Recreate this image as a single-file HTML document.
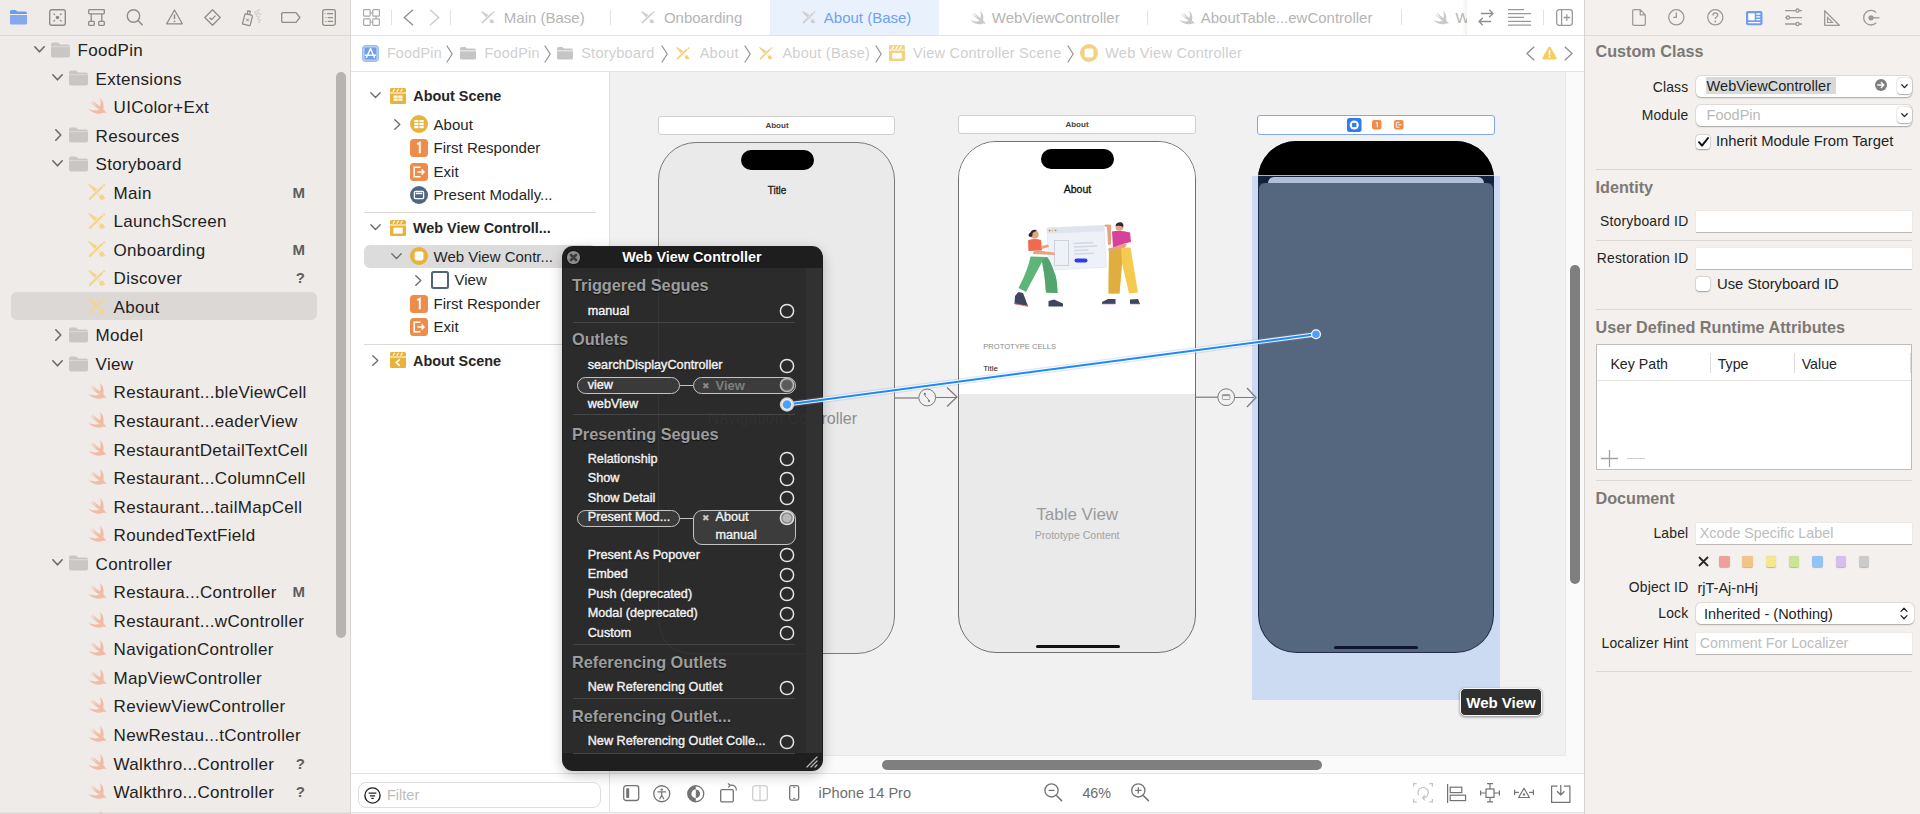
<!DOCTYPE html>
<html><head><meta charset="utf-8"><style>
html,body{margin:0;padding:0;}
body{width:1920px;height:814px;overflow:hidden;position:relative;background:#fff;font-family:"Liberation Sans",sans-serif;}
.a{position:absolute;}
.t{position:absolute;white-space:nowrap;}
svg.a{overflow:visible;}
</style></head><body>
<div class="a" style="left:0px;top:0px;width:350px;height:814px;background:#EFEBE8;"></div><div class="a" style="left:350px;top:0px;width:1px;height:814px;background:#D9D6D3;"></div><div class="a" style="left:0px;top:35px;width:350px;height:1px;background:#DAD7D4;"></div><div class="a" style="left:351px;top:0px;width:1234px;height:814px;background:#FFFFFF;"></div><div class="a" style="left:351px;top:35px;width:1234px;height:1px;background:#E3E3E3;"></div><div class="a" style="left:351px;top:71px;width:1234px;height:1px;background:#E3E3E3;"></div><div class="a" style="left:610px;top:72px;width:956px;height:683px;background:#F1F1F1;"></div><div class="a" style="left:609px;top:72px;width:1px;height:740px;background:#E2E2E2;"></div><div class="a" style="left:1566px;top:72px;width:19px;height:702px;background:#FAFAFA;"></div><div class="a" style="left:610px;top:755px;width:956px;height:18px;background:#FAFAFA;"></div><div class="a" style="left:610px;top:755px;width:956px;height:1px;background:#E8E8E8;"></div><div class="a" style="left:1565px;top:72px;width:1px;height:683px;background:#E8E8E8;"></div><div class="a" style="left:351px;top:773px;width:1234px;height:1px;background:#E3E3E3;"></div><div class="a" style="left:351px;top:812px;width:1234px;height:1px;background:#E2E2E2;"></div><div class="a" style="left:351px;top:813px;width:1234px;height:1px;background:#F4F4F4;"></div><div class="a" style="left:0px;top:812px;width:350px;height:1px;background:#E6E2DF;"></div><div class="a" style="left:0px;top:813px;width:350px;height:1px;background:#DCD8D5;"></div><div class="a" style="left:1584px;top:0px;width:1px;height:814px;background:#D6D3D0;"></div><div class="a" style="left:1585px;top:0px;width:335px;height:814px;background:#F3F0ED;"></div><div class="a" style="left:1585px;top:35px;width:335px;height:1px;background:#DCD9D6;"></div><div class="a" style="left:11px;top:292px;width:306px;height:28px;background:#DCD8D5;border-radius:6px;"></div><div class="t" style="top:42.01px;font-size:17px;line-height:17px;color:#222222;letter-spacing:0.3px;left:77.60px;">FoodPin</div><svg class="a" style="left:33.599999999999994px;top:45.6px;" width="11" height="7" viewBox="0 0 11 7"><path d="M0.8 0.8 L5.5 5.8 L10.2 0.8" fill="none" stroke="#6A6A6A" stroke-width="1.6" stroke-linecap="round" stroke-linejoin="round"/></svg><svg class="a" style="left:50.599999999999994px;top:41.6px;" width="19" height="16" viewBox="0 0 19 16"><path d="M0 2.5 Q0 0.5 2 0.5 L6.5 0.5 Q7.5 0.5 8.2 1.5 L9 2.6 L17 2.6 Q19 2.6 19 4.6 L19 13.8 Q19 15.6 17 15.6 L2 15.6 Q0 15.6 0 13.8 Z" fill="#C9C7C5"/><rect x="0" y="4.2" width="19" height="1" fill="#DCDAD8"/></svg><div class="t" style="top:70.55px;font-size:17px;line-height:17px;color:#222222;letter-spacing:0.3px;left:95.60px;">Extensions</div><svg class="a" style="left:51.599999999999994px;top:74.14px;" width="11" height="7" viewBox="0 0 11 7"><path d="M0.8 0.8 L5.5 5.8 L10.2 0.8" fill="none" stroke="#6A6A6A" stroke-width="1.6" stroke-linecap="round" stroke-linejoin="round"/></svg><svg class="a" style="left:68.6px;top:70.14px;" width="19" height="16" viewBox="0 0 19 16"><path d="M0 2.5 Q0 0.5 2 0.5 L6.5 0.5 Q7.5 0.5 8.2 1.5 L9 2.6 L17 2.6 Q19 2.6 19 4.6 L19 13.8 Q19 15.6 17 15.6 L2 15.6 Q0 15.6 0 13.8 Z" fill="#C9C7C5"/><rect x="0" y="4.2" width="19" height="1" fill="#DCDAD8"/></svg><div class="t" style="top:99.09px;font-size:17px;line-height:17px;color:#222222;letter-spacing:0.3px;left:113.60px;">UIColor+Ext</div><svg class="a" style="left:87.6px;top:97.98px;" width="19" height="17" viewBox="0 0 19 17"><path d="M11.9 0.1 C15.5 3 16.3 8 15.2 11 C16.5 12.5 18 14 18.4 15.2 C17 14.5 15.5 14.6 14.5 15 C11 16.5 5 15.5 0.1 10.7 C4 12.5 8.5 13 11.3 11.5 C8 9.5 4.5 6.5 2 3 C5 5.5 8 7.8 9.6 8.8 C7.5 6.8 5.6 4.5 4.3 1.9 C7 4.5 10 7 12 8.4 C13 5.8 13 3 11.9 0.1 Z" fill="#F2BBA5"/></svg><div class="t" style="top:127.63px;font-size:17px;line-height:17px;color:#222222;letter-spacing:0.3px;left:95.60px;">Resources</div><svg class="a" style="left:54.599999999999994px;top:129.22px;" width="7" height="12" viewBox="0 0 7 12"><path d="M0.8 0.8 L5.8 6 L0.8 11.2" fill="none" stroke="#6A6A6A" stroke-width="1.6" stroke-linecap="round" stroke-linejoin="round"/></svg><svg class="a" style="left:68.6px;top:127.22px;" width="19" height="16" viewBox="0 0 19 16"><path d="M0 2.5 Q0 0.5 2 0.5 L6.5 0.5 Q7.5 0.5 8.2 1.5 L9 2.6 L17 2.6 Q19 2.6 19 4.6 L19 13.8 Q19 15.6 17 15.6 L2 15.6 Q0 15.6 0 13.8 Z" fill="#C9C7C5"/><rect x="0" y="4.2" width="19" height="1" fill="#DCDAD8"/></svg><div class="t" style="top:156.17px;font-size:17px;line-height:17px;color:#222222;letter-spacing:0.3px;left:95.60px;">Storyboard</div><svg class="a" style="left:51.599999999999994px;top:159.76px;" width="11" height="7" viewBox="0 0 11 7"><path d="M0.8 0.8 L5.5 5.8 L10.2 0.8" fill="none" stroke="#6A6A6A" stroke-width="1.6" stroke-linecap="round" stroke-linejoin="round"/></svg><svg class="a" style="left:68.6px;top:155.76px;" width="19" height="16" viewBox="0 0 19 16"><path d="M0 2.5 Q0 0.5 2 0.5 L6.5 0.5 Q7.5 0.5 8.2 1.5 L9 2.6 L17 2.6 Q19 2.6 19 4.6 L19 13.8 Q19 15.6 17 15.6 L2 15.6 Q0 15.6 0 13.8 Z" fill="#C9C7C5"/><rect x="0" y="4.2" width="19" height="1" fill="#DCDAD8"/></svg><div class="t" style="top:184.71px;font-size:17px;line-height:17px;color:#222222;letter-spacing:0.3px;left:113.60px;">Main</div><div class="t" style="top:184.80px;font-size:15px;line-height:15px;color:#5E5E5E;font-weight:700;right:1615.00px;text-align:right;">M</div><svg class="a" style="left:87.6px;top:183.99999999999997px;" width="19" height="17" viewBox="0 0 19 17"><path d="M0.9 0.7 L8.4 5.0 L6.5 7.2 Z" fill="#F2D68E" stroke="#F2D68E" stroke-width="1.3" stroke-linejoin="round"/><path d="M1.9 14.9 L13.8 3.3" stroke="#F2D68E" stroke-width="2.3" stroke-linecap="round"/><circle cx="16" cy="1.4" r="1.2" fill="#F2D68E"/><circle cx="10.2" cy="10.7" r="0.6" fill="#F2D68E"/><circle cx="11.6" cy="9.4" r="0.6" fill="#F2D68E"/><path d="M11.2 13.2 Q11.6 10.4 14 10.6 Q16 11 16.2 13 Q16.6 14 17.6 14.6 Q14.8 16.2 12.6 15.4 Q11.2 14.8 11.2 13.2 Z" fill="#F2D68E"/></svg><div class="t" style="top:213.25px;font-size:17px;line-height:17px;color:#222222;letter-spacing:0.3px;left:113.60px;">LaunchScreen</div><svg class="a" style="left:87.6px;top:212.54px;" width="19" height="17" viewBox="0 0 19 17"><path d="M0.9 0.7 L8.4 5.0 L6.5 7.2 Z" fill="#F2D68E" stroke="#F2D68E" stroke-width="1.3" stroke-linejoin="round"/><path d="M1.9 14.9 L13.8 3.3" stroke="#F2D68E" stroke-width="2.3" stroke-linecap="round"/><circle cx="16" cy="1.4" r="1.2" fill="#F2D68E"/><circle cx="10.2" cy="10.7" r="0.6" fill="#F2D68E"/><circle cx="11.6" cy="9.4" r="0.6" fill="#F2D68E"/><path d="M11.2 13.2 Q11.6 10.4 14 10.6 Q16 11 16.2 13 Q16.6 14 17.6 14.6 Q14.8 16.2 12.6 15.4 Q11.2 14.8 11.2 13.2 Z" fill="#F2D68E"/></svg><div class="t" style="top:241.79px;font-size:17px;line-height:17px;color:#222222;letter-spacing:0.3px;left:113.60px;">Onboarding</div><div class="t" style="top:241.88px;font-size:15px;line-height:15px;color:#5E5E5E;font-weight:700;right:1615.00px;text-align:right;">M</div><svg class="a" style="left:87.6px;top:241.07999999999998px;" width="19" height="17" viewBox="0 0 19 17"><path d="M0.9 0.7 L8.4 5.0 L6.5 7.2 Z" fill="#F2D68E" stroke="#F2D68E" stroke-width="1.3" stroke-linejoin="round"/><path d="M1.9 14.9 L13.8 3.3" stroke="#F2D68E" stroke-width="2.3" stroke-linecap="round"/><circle cx="16" cy="1.4" r="1.2" fill="#F2D68E"/><circle cx="10.2" cy="10.7" r="0.6" fill="#F2D68E"/><circle cx="11.6" cy="9.4" r="0.6" fill="#F2D68E"/><path d="M11.2 13.2 Q11.6 10.4 14 10.6 Q16 11 16.2 13 Q16.6 14 17.6 14.6 Q14.8 16.2 12.6 15.4 Q11.2 14.8 11.2 13.2 Z" fill="#F2D68E"/></svg><div class="t" style="top:270.33px;font-size:17px;line-height:17px;color:#222222;letter-spacing:0.3px;left:113.60px;">Discover</div><div class="t" style="top:270.42px;font-size:15px;line-height:15px;color:#5E5E5E;font-weight:700;right:1615.00px;text-align:right;">?</div><svg class="a" style="left:87.6px;top:269.62px;" width="19" height="17" viewBox="0 0 19 17"><path d="M0.9 0.7 L8.4 5.0 L6.5 7.2 Z" fill="#F2D68E" stroke="#F2D68E" stroke-width="1.3" stroke-linejoin="round"/><path d="M1.9 14.9 L13.8 3.3" stroke="#F2D68E" stroke-width="2.3" stroke-linecap="round"/><circle cx="16" cy="1.4" r="1.2" fill="#F2D68E"/><circle cx="10.2" cy="10.7" r="0.6" fill="#F2D68E"/><circle cx="11.6" cy="9.4" r="0.6" fill="#F2D68E"/><path d="M11.2 13.2 Q11.6 10.4 14 10.6 Q16 11 16.2 13 Q16.6 14 17.6 14.6 Q14.8 16.2 12.6 15.4 Q11.2 14.8 11.2 13.2 Z" fill="#F2D68E"/></svg><div class="t" style="top:298.87px;font-size:17px;line-height:17px;color:#222222;letter-spacing:0.3px;left:113.60px;">About</div><svg class="a" style="left:87.6px;top:298.16px;" width="19" height="17" viewBox="0 0 19 17"><path d="M0.9 0.7 L8.4 5.0 L6.5 7.2 Z" fill="#F2D68E" stroke="#F2D68E" stroke-width="1.3" stroke-linejoin="round"/><path d="M1.9 14.9 L13.8 3.3" stroke="#F2D68E" stroke-width="2.3" stroke-linecap="round"/><circle cx="16" cy="1.4" r="1.2" fill="#F2D68E"/><circle cx="10.2" cy="10.7" r="0.6" fill="#F2D68E"/><circle cx="11.6" cy="9.4" r="0.6" fill="#F2D68E"/><path d="M11.2 13.2 Q11.6 10.4 14 10.6 Q16 11 16.2 13 Q16.6 14 17.6 14.6 Q14.8 16.2 12.6 15.4 Q11.2 14.8 11.2 13.2 Z" fill="#F2D68E"/></svg><div class="t" style="top:327.41px;font-size:17px;line-height:17px;color:#222222;letter-spacing:0.3px;left:95.60px;">Model</div><svg class="a" style="left:54.599999999999994px;top:329.0px;" width="7" height="12" viewBox="0 0 7 12"><path d="M0.8 0.8 L5.8 6 L0.8 11.2" fill="none" stroke="#6A6A6A" stroke-width="1.6" stroke-linecap="round" stroke-linejoin="round"/></svg><svg class="a" style="left:68.6px;top:327.0px;" width="19" height="16" viewBox="0 0 19 16"><path d="M0 2.5 Q0 0.5 2 0.5 L6.5 0.5 Q7.5 0.5 8.2 1.5 L9 2.6 L17 2.6 Q19 2.6 19 4.6 L19 13.8 Q19 15.6 17 15.6 L2 15.6 Q0 15.6 0 13.8 Z" fill="#C9C7C5"/><rect x="0" y="4.2" width="19" height="1" fill="#DCDAD8"/></svg><div class="t" style="top:355.95px;font-size:17px;line-height:17px;color:#222222;letter-spacing:0.3px;left:95.60px;">View</div><svg class="a" style="left:51.599999999999994px;top:359.54px;" width="11" height="7" viewBox="0 0 11 7"><path d="M0.8 0.8 L5.5 5.8 L10.2 0.8" fill="none" stroke="#6A6A6A" stroke-width="1.6" stroke-linecap="round" stroke-linejoin="round"/></svg><svg class="a" style="left:68.6px;top:355.54px;" width="19" height="16" viewBox="0 0 19 16"><path d="M0 2.5 Q0 0.5 2 0.5 L6.5 0.5 Q7.5 0.5 8.2 1.5 L9 2.6 L17 2.6 Q19 2.6 19 4.6 L19 13.8 Q19 15.6 17 15.6 L2 15.6 Q0 15.6 0 13.8 Z" fill="#C9C7C5"/><rect x="0" y="4.2" width="19" height="1" fill="#DCDAD8"/></svg><div class="t" style="top:384.49px;font-size:17px;line-height:17px;color:#222222;letter-spacing:0.3px;left:113.60px;">Restaurant...bleViewCell</div><svg class="a" style="left:87.6px;top:383.38000000000005px;" width="19" height="17" viewBox="0 0 19 17"><path d="M11.9 0.1 C15.5 3 16.3 8 15.2 11 C16.5 12.5 18 14 18.4 15.2 C17 14.5 15.5 14.6 14.5 15 C11 16.5 5 15.5 0.1 10.7 C4 12.5 8.5 13 11.3 11.5 C8 9.5 4.5 6.5 2 3 C5 5.5 8 7.8 9.6 8.8 C7.5 6.8 5.6 4.5 4.3 1.9 C7 4.5 10 7 12 8.4 C13 5.8 13 3 11.9 0.1 Z" fill="#F2BBA5"/></svg><div class="t" style="top:413.03px;font-size:17px;line-height:17px;color:#222222;letter-spacing:0.3px;left:113.60px;">Restaurant...eaderView</div><svg class="a" style="left:87.6px;top:411.92px;" width="19" height="17" viewBox="0 0 19 17"><path d="M11.9 0.1 C15.5 3 16.3 8 15.2 11 C16.5 12.5 18 14 18.4 15.2 C17 14.5 15.5 14.6 14.5 15 C11 16.5 5 15.5 0.1 10.7 C4 12.5 8.5 13 11.3 11.5 C8 9.5 4.5 6.5 2 3 C5 5.5 8 7.8 9.6 8.8 C7.5 6.8 5.6 4.5 4.3 1.9 C7 4.5 10 7 12 8.4 C13 5.8 13 3 11.9 0.1 Z" fill="#F2BBA5"/></svg><div class="t" style="top:441.57px;font-size:17px;line-height:17px;color:#222222;letter-spacing:0.3px;left:113.60px;">RestaurantDetailTextCell</div><svg class="a" style="left:87.6px;top:440.46000000000004px;" width="19" height="17" viewBox="0 0 19 17"><path d="M11.9 0.1 C15.5 3 16.3 8 15.2 11 C16.5 12.5 18 14 18.4 15.2 C17 14.5 15.5 14.6 14.5 15 C11 16.5 5 15.5 0.1 10.7 C4 12.5 8.5 13 11.3 11.5 C8 9.5 4.5 6.5 2 3 C5 5.5 8 7.8 9.6 8.8 C7.5 6.8 5.6 4.5 4.3 1.9 C7 4.5 10 7 12 8.4 C13 5.8 13 3 11.9 0.1 Z" fill="#F2BBA5"/></svg><div class="t" style="top:470.11px;font-size:17px;line-height:17px;color:#222222;letter-spacing:0.3px;left:113.60px;">Restaurant...ColumnCell</div><svg class="a" style="left:87.6px;top:469.0px;" width="19" height="17" viewBox="0 0 19 17"><path d="M11.9 0.1 C15.5 3 16.3 8 15.2 11 C16.5 12.5 18 14 18.4 15.2 C17 14.5 15.5 14.6 14.5 15 C11 16.5 5 15.5 0.1 10.7 C4 12.5 8.5 13 11.3 11.5 C8 9.5 4.5 6.5 2 3 C5 5.5 8 7.8 9.6 8.8 C7.5 6.8 5.6 4.5 4.3 1.9 C7 4.5 10 7 12 8.4 C13 5.8 13 3 11.9 0.1 Z" fill="#F2BBA5"/></svg><div class="t" style="top:498.65px;font-size:17px;line-height:17px;color:#222222;letter-spacing:0.3px;left:113.60px;">Restaurant...tailMapCell</div><svg class="a" style="left:87.6px;top:497.54px;" width="19" height="17" viewBox="0 0 19 17"><path d="M11.9 0.1 C15.5 3 16.3 8 15.2 11 C16.5 12.5 18 14 18.4 15.2 C17 14.5 15.5 14.6 14.5 15 C11 16.5 5 15.5 0.1 10.7 C4 12.5 8.5 13 11.3 11.5 C8 9.5 4.5 6.5 2 3 C5 5.5 8 7.8 9.6 8.8 C7.5 6.8 5.6 4.5 4.3 1.9 C7 4.5 10 7 12 8.4 C13 5.8 13 3 11.9 0.1 Z" fill="#F2BBA5"/></svg><div class="t" style="top:527.19px;font-size:17px;line-height:17px;color:#222222;letter-spacing:0.3px;left:113.60px;">RoundedTextField</div><svg class="a" style="left:87.6px;top:526.0799999999999px;" width="19" height="17" viewBox="0 0 19 17"><path d="M11.9 0.1 C15.5 3 16.3 8 15.2 11 C16.5 12.5 18 14 18.4 15.2 C17 14.5 15.5 14.6 14.5 15 C11 16.5 5 15.5 0.1 10.7 C4 12.5 8.5 13 11.3 11.5 C8 9.5 4.5 6.5 2 3 C5 5.5 8 7.8 9.6 8.8 C7.5 6.8 5.6 4.5 4.3 1.9 C7 4.5 10 7 12 8.4 C13 5.8 13 3 11.9 0.1 Z" fill="#F2BBA5"/></svg><div class="t" style="top:555.73px;font-size:17px;line-height:17px;color:#222222;letter-spacing:0.3px;left:95.60px;">Controller</div><svg class="a" style="left:51.599999999999994px;top:559.32px;" width="11" height="7" viewBox="0 0 11 7"><path d="M0.8 0.8 L5.5 5.8 L10.2 0.8" fill="none" stroke="#6A6A6A" stroke-width="1.6" stroke-linecap="round" stroke-linejoin="round"/></svg><svg class="a" style="left:68.6px;top:555.32px;" width="19" height="16" viewBox="0 0 19 16"><path d="M0 2.5 Q0 0.5 2 0.5 L6.5 0.5 Q7.5 0.5 8.2 1.5 L9 2.6 L17 2.6 Q19 2.6 19 4.6 L19 13.8 Q19 15.6 17 15.6 L2 15.6 Q0 15.6 0 13.8 Z" fill="#C9C7C5"/><rect x="0" y="4.2" width="19" height="1" fill="#DCDAD8"/></svg><div class="t" style="top:584.27px;font-size:17px;line-height:17px;color:#222222;letter-spacing:0.3px;left:113.60px;">Restaura...Controller</div><div class="t" style="top:584.36px;font-size:15px;line-height:15px;color:#5E5E5E;font-weight:700;right:1615.00px;text-align:right;">M</div><svg class="a" style="left:87.6px;top:583.16px;" width="19" height="17" viewBox="0 0 19 17"><path d="M11.9 0.1 C15.5 3 16.3 8 15.2 11 C16.5 12.5 18 14 18.4 15.2 C17 14.5 15.5 14.6 14.5 15 C11 16.5 5 15.5 0.1 10.7 C4 12.5 8.5 13 11.3 11.5 C8 9.5 4.5 6.5 2 3 C5 5.5 8 7.8 9.6 8.8 C7.5 6.8 5.6 4.5 4.3 1.9 C7 4.5 10 7 12 8.4 C13 5.8 13 3 11.9 0.1 Z" fill="#F2BBA5"/></svg><div class="t" style="top:612.81px;font-size:17px;line-height:17px;color:#222222;letter-spacing:0.3px;left:113.60px;">Restaurant...wController</div><svg class="a" style="left:87.6px;top:611.6999999999999px;" width="19" height="17" viewBox="0 0 19 17"><path d="M11.9 0.1 C15.5 3 16.3 8 15.2 11 C16.5 12.5 18 14 18.4 15.2 C17 14.5 15.5 14.6 14.5 15 C11 16.5 5 15.5 0.1 10.7 C4 12.5 8.5 13 11.3 11.5 C8 9.5 4.5 6.5 2 3 C5 5.5 8 7.8 9.6 8.8 C7.5 6.8 5.6 4.5 4.3 1.9 C7 4.5 10 7 12 8.4 C13 5.8 13 3 11.9 0.1 Z" fill="#F2BBA5"/></svg><div class="t" style="top:641.35px;font-size:17px;line-height:17px;color:#222222;letter-spacing:0.3px;left:113.60px;">NavigationController</div><svg class="a" style="left:87.6px;top:640.24px;" width="19" height="17" viewBox="0 0 19 17"><path d="M11.9 0.1 C15.5 3 16.3 8 15.2 11 C16.5 12.5 18 14 18.4 15.2 C17 14.5 15.5 14.6 14.5 15 C11 16.5 5 15.5 0.1 10.7 C4 12.5 8.5 13 11.3 11.5 C8 9.5 4.5 6.5 2 3 C5 5.5 8 7.8 9.6 8.8 C7.5 6.8 5.6 4.5 4.3 1.9 C7 4.5 10 7 12 8.4 C13 5.8 13 3 11.9 0.1 Z" fill="#F2BBA5"/></svg><div class="t" style="top:669.89px;font-size:17px;line-height:17px;color:#222222;letter-spacing:0.3px;left:113.60px;">MapViewController</div><svg class="a" style="left:87.6px;top:668.78px;" width="19" height="17" viewBox="0 0 19 17"><path d="M11.9 0.1 C15.5 3 16.3 8 15.2 11 C16.5 12.5 18 14 18.4 15.2 C17 14.5 15.5 14.6 14.5 15 C11 16.5 5 15.5 0.1 10.7 C4 12.5 8.5 13 11.3 11.5 C8 9.5 4.5 6.5 2 3 C5 5.5 8 7.8 9.6 8.8 C7.5 6.8 5.6 4.5 4.3 1.9 C7 4.5 10 7 12 8.4 C13 5.8 13 3 11.9 0.1 Z" fill="#F2BBA5"/></svg><div class="t" style="top:698.43px;font-size:17px;line-height:17px;color:#222222;letter-spacing:0.3px;left:113.60px;">ReviewViewController</div><svg class="a" style="left:87.6px;top:697.3199999999999px;" width="19" height="17" viewBox="0 0 19 17"><path d="M11.9 0.1 C15.5 3 16.3 8 15.2 11 C16.5 12.5 18 14 18.4 15.2 C17 14.5 15.5 14.6 14.5 15 C11 16.5 5 15.5 0.1 10.7 C4 12.5 8.5 13 11.3 11.5 C8 9.5 4.5 6.5 2 3 C5 5.5 8 7.8 9.6 8.8 C7.5 6.8 5.6 4.5 4.3 1.9 C7 4.5 10 7 12 8.4 C13 5.8 13 3 11.9 0.1 Z" fill="#F2BBA5"/></svg><div class="t" style="top:726.97px;font-size:17px;line-height:17px;color:#222222;letter-spacing:0.3px;left:113.60px;">NewRestau...tController</div><svg class="a" style="left:87.6px;top:725.86px;" width="19" height="17" viewBox="0 0 19 17"><path d="M11.9 0.1 C15.5 3 16.3 8 15.2 11 C16.5 12.5 18 14 18.4 15.2 C17 14.5 15.5 14.6 14.5 15 C11 16.5 5 15.5 0.1 10.7 C4 12.5 8.5 13 11.3 11.5 C8 9.5 4.5 6.5 2 3 C5 5.5 8 7.8 9.6 8.8 C7.5 6.8 5.6 4.5 4.3 1.9 C7 4.5 10 7 12 8.4 C13 5.8 13 3 11.9 0.1 Z" fill="#F2BBA5"/></svg><div class="t" style="top:755.51px;font-size:17px;line-height:17px;color:#222222;letter-spacing:0.3px;left:113.60px;">Walkthro...Controller</div><div class="t" style="top:755.60px;font-size:15px;line-height:15px;color:#5E5E5E;font-weight:700;right:1615.00px;text-align:right;">?</div><svg class="a" style="left:87.6px;top:754.4px;" width="19" height="17" viewBox="0 0 19 17"><path d="M11.9 0.1 C15.5 3 16.3 8 15.2 11 C16.5 12.5 18 14 18.4 15.2 C17 14.5 15.5 14.6 14.5 15 C11 16.5 5 15.5 0.1 10.7 C4 12.5 8.5 13 11.3 11.5 C8 9.5 4.5 6.5 2 3 C5 5.5 8 7.8 9.6 8.8 C7.5 6.8 5.6 4.5 4.3 1.9 C7 4.5 10 7 12 8.4 C13 5.8 13 3 11.9 0.1 Z" fill="#F2BBA5"/></svg><div class="t" style="top:784.05px;font-size:17px;line-height:17px;color:#222222;letter-spacing:0.3px;left:113.60px;">Walkthro...Controller</div><div class="t" style="top:784.14px;font-size:15px;line-height:15px;color:#5E5E5E;font-weight:700;right:1615.00px;text-align:right;">?</div><svg class="a" style="left:87.6px;top:782.9399999999999px;" width="19" height="17" viewBox="0 0 19 17"><path d="M11.9 0.1 C15.5 3 16.3 8 15.2 11 C16.5 12.5 18 14 18.4 15.2 C17 14.5 15.5 14.6 14.5 15 C11 16.5 5 15.5 0.1 10.7 C4 12.5 8.5 13 11.3 11.5 C8 9.5 4.5 6.5 2 3 C5 5.5 8 7.8 9.6 8.8 C7.5 6.8 5.6 4.5 4.3 1.9 C7 4.5 10 7 12 8.4 C13 5.8 13 3 11.9 0.1 Z" fill="#F2BBA5"/></svg><svg class="a" style="left:88px;top:810.5px;" width="19" height="17" viewBox="0 0 19 17"><path d="M11.9 0.1 C15.5 3 16.3 8 15.2 11 C16.5 12.5 18 14 18.4 15.2 C17 14.5 15.5 14.6 14.5 15 C11 16.5 5 15.5 0.1 10.7 C4 12.5 8.5 13 11.3 11.5 C8 9.5 4.5 6.5 2 3 C5 5.5 8 7.8 9.6 8.8 C7.5 6.8 5.6 4.5 4.3 1.9 C7 4.5 10 7 12 8.4 C13 5.8 13 3 11.9 0.1 Z" fill="#F2BBA5"/></svg><div class="a" style="left:336px;top:72px;width:10px;height:566px;background:#B6B4B2;border-radius:5px;"></div><svg class="a" style="left:9.8px;top:10px;" width="17" height="15" viewBox="0 0 17 15"><path d="M0 1.6 Q0 0 1.6 0 L5.2 0 Q6 0 6.6 0.8 L7.2 1.6 L15.4 1.6 Q17 1.6 17 3.2 L17 3.9 L0 3.9 Z" fill="#6E9BE8"/><path d="M0 4.9 L17 4.9 L17 13.2 Q17 14.6 15.4 14.6 L1.6 14.6 Q0 14.6 0 13.2 Z" fill="#84A9EC"/></svg><svg class="a" style="left:48.7px;top:9px;" width="17" height="17" viewBox="0 0 17 17"><rect x="0.7" y="0.7" width="15.6" height="15.6" rx="2" fill="none" stroke="#8F8B87" stroke-width="1.4"/><circle cx="8.5" cy="8.5" r="1.8" fill="#8F8B87"/><path d="M4.5 4.5 L6 6 M12.5 4.5 L11 6 M4.5 12.5 L6 11 M12.5 12.5 L11 11" stroke="#8F8B87" stroke-width="1.1"/></svg><svg class="a" style="left:87.5px;top:9px;" width="17" height="17" viewBox="0 0 17 17"><rect x="0.7" y="0.6" width="15.6" height="4.2" rx="0.8" fill="none" stroke="#8F8B87" stroke-width="1.3"/><path d="M3.2 4.8 L3.2 12.4 M13.8 4.8 L13.8 12.4" stroke="#8F8B87" stroke-width="1.3"/><rect x="0.7" y="12.4" width="5.6" height="4" rx="0.8" fill="none" stroke="#8F8B87" stroke-width="1.3"/><rect x="10.7" y="12.4" width="5.6" height="4" rx="0.8" fill="none" stroke="#8F8B87" stroke-width="1.3"/></svg><svg class="a" style="left:126px;top:9px;" width="17" height="17" viewBox="0 0 17 17"><circle cx="7.5" cy="7" r="6.2" fill="none" stroke="#8F8B87" stroke-width="1.4"/><path d="M12 11.5 L16.2 15.8" stroke="#8F8B87" stroke-width="1.5" stroke-linecap="round"/></svg><svg class="a" style="left:165.5px;top:8.5px;" width="17" height="16" viewBox="0 0 17 16"><path d="M8.5 1 L16.3 14.8 L0.7 14.8 Z" fill="none" stroke="#8F8B87" stroke-width="1.3" stroke-linejoin="round"/><path d="M8.5 5.5 L8.5 10" stroke="#8F8B87" stroke-width="1.5"/><circle cx="8.5" cy="12.3" r="0.9" fill="#8F8B87"/></svg><svg class="a" style="left:204px;top:9px;" width="17" height="17" viewBox="0 0 17 17"><path d="M8.5 0.8 L16.2 8.5 L8.5 16.2 L0.8 8.5 Z" fill="none" stroke="#8F8B87" stroke-width="1.3" stroke-linejoin="round"/><path d="M5.5 8.7 L7.6 10.6 L11.5 6.6" fill="none" stroke="#8F8B87" stroke-width="1.3"/></svg><svg class="a" style="left:242px;top:9px;" width="20" height="17" viewBox="0 0 20 17"><path d="M3.6 4.8 L9.6 6.2 Q10.6 6.5 10.4 7.5 L8.2 16 Q8 16.8 7.2 16.6 L1.2 15.2 Q0.4 15 0.6 14.2 L2.8 5.6 Q3 4.7 3.6 4.8 Z" fill="none" stroke="#8F8B87" stroke-width="1.2"/><path d="M5.2 5 L5.9 1.8 L8.3 2.3 L7.6 5.6" fill="none" stroke="#8F8B87" stroke-width="1.2"/><path d="M4.3 9.6 L6.8 12.3 M6.8 9.6 L4.3 12.3" stroke="#8F8B87" stroke-width="1"/><g fill="#8F8B87"><circle cx="13" cy="3" r="0.55"/><circle cx="15" cy="2" r="0.55"/><circle cx="17" cy="1" r="0.55"/><circle cx="14" cy="5" r="0.55"/><circle cx="16" cy="4" r="0.55"/><circle cx="18" cy="5" r="0.55"/><circle cx="15" cy="7" r="0.55"/><circle cx="17" cy="8" r="0.55"/><circle cx="16" cy="10" r="0.55"/><circle cx="18" cy="11" r="0.55"/><circle cx="17" cy="13" r="0.55"/></g></svg><svg class="a" style="left:281px;top:12px;" width="20" height="11" viewBox="0 0 20 11"><path d="M1.9 0.7 L15 0.7 L18.8 5.5 L15 10.3 L1.9 10.3 Q0.7 10.3 0.7 9 L0.7 2 Q0.7 0.7 1.9 0.7 Z" fill="none" stroke="#8F8B87" stroke-width="1.3" stroke-linejoin="round"/></svg><svg class="a" style="left:322px;top:9px;" width="14" height="17" viewBox="0 0 14 17"><rect x="0.7" y="0.7" width="12.6" height="15.6" rx="1.8" fill="none" stroke="#8F8B87" stroke-width="1.3"/><g fill="#8F8B87"><circle cx="3" cy="4.6" r="0.6"/><circle cx="4" cy="8.6" r="0.6"/><circle cx="4" cy="12.4" r="0.6"/></g><path d="M5 4.6 L11 4.6 M5.8 8.6 L11 8.6 M5.8 12.4 L11 12.4" stroke="#8F8B87" stroke-width="1.2"/></svg><svg class="a" style="left:363px;top:9px;" width="17" height="17" viewBox="0 0 17 17"><g fill="none" stroke="#A9A9A9" stroke-width="1.2"><rect x="0.6" y="0.6" width="6.6" height="6.6" rx="0.8"/><rect x="9.8" y="0.6" width="6.6" height="6.6" rx="0.8"/><rect x="0.6" y="9.8" width="6.6" height="6.6" rx="0.8"/><rect x="9.8" y="9.8" width="6.6" height="6.6" rx="0.8"/><path d="M7.2 3.9 L9.8 3.9 M13.1 7.2 L13.1 9.8 M7.2 13.1 L9.8 13.1"/></g></svg><div class="a" style="left:391px;top:10px;width:1.2px;height:15px;background:#E2E2E2;"></div><svg class="a" style="left:403px;top:9px;" width="11" height="17" viewBox="0 0 11 17"><path d="M10 0.8 L1.2 8.5 L10 16.2" fill="none" stroke="#8E8E8E" stroke-width="1.3"/></svg><svg class="a" style="left:429px;top:9px;" width="11" height="17" viewBox="0 0 11 17"><path d="M1 0.8 L9.8 8.5 L1 16.2" fill="none" stroke="#C9C9C9" stroke-width="1.3"/></svg><div class="a" style="left:450px;top:10px;width:1.2px;height:15px;background:#E2E2E2;"></div><div class="a" style="left:770px;top:0px;width:169px;height:35px;background:#E9F1FD;"></div><svg class="a" style="left:481px;top:11px;" width="14" height="13" viewBox="0 0 18 16.5"><path d="M0.9 0.7 L8.4 5.0 L6.5 7.2 Z" fill="#CFCFCF" stroke="#CFCFCF" stroke-width="1.3" stroke-linejoin="round"/><path d="M1.9 14.9 L13.8 3.3" stroke="#CFCFCF" stroke-width="2.3" stroke-linecap="round"/><circle cx="16" cy="1.4" r="1.2" fill="#CFCFCF"/><circle cx="10.2" cy="10.7" r="0.6" fill="#CFCFCF"/><circle cx="11.6" cy="9.4" r="0.6" fill="#CFCFCF"/><path d="M11.2 13.2 Q11.6 10.4 14 10.6 Q16 11 16.2 13 Q16.6 14 17.6 14.6 Q14.8 16.2 12.6 15.4 Q11.2 14.8 11.2 13.2 Z" fill="#CFCFCF"/></svg><div class="t" style="top:10.10px;font-size:15px;line-height:15px;color:#B5B5B5;left:503.80px;">Main (Base)</div><svg class="a" style="left:641px;top:11px;" width="14" height="13" viewBox="0 0 18 16.5"><path d="M0.9 0.7 L8.4 5.0 L6.5 7.2 Z" fill="#CFCFCF" stroke="#CFCFCF" stroke-width="1.3" stroke-linejoin="round"/><path d="M1.9 14.9 L13.8 3.3" stroke="#CFCFCF" stroke-width="2.3" stroke-linecap="round"/><circle cx="16" cy="1.4" r="1.2" fill="#CFCFCF"/><circle cx="10.2" cy="10.7" r="0.6" fill="#CFCFCF"/><circle cx="11.6" cy="9.4" r="0.6" fill="#CFCFCF"/><path d="M11.2 13.2 Q11.6 10.4 14 10.6 Q16 11 16.2 13 Q16.6 14 17.6 14.6 Q14.8 16.2 12.6 15.4 Q11.2 14.8 11.2 13.2 Z" fill="#CFCFCF"/></svg><div class="t" style="top:10.10px;font-size:15px;line-height:15px;color:#B5B5B5;left:663.90px;">Onboarding</div><svg class="a" style="left:801.7px;top:11px;" width="14" height="13" viewBox="0 0 18 16.5"><path d="M0.9 0.7 L8.4 5.0 L6.5 7.2 Z" fill="#CFCFCF" stroke="#CFCFCF" stroke-width="1.3" stroke-linejoin="round"/><path d="M1.9 14.9 L13.8 3.3" stroke="#CFCFCF" stroke-width="2.3" stroke-linecap="round"/><circle cx="16" cy="1.4" r="1.2" fill="#CFCFCF"/><circle cx="10.2" cy="10.7" r="0.6" fill="#CFCFCF"/><circle cx="11.6" cy="9.4" r="0.6" fill="#CFCFCF"/><path d="M11.2 13.2 Q11.6 10.4 14 10.6 Q16 11 16.2 13 Q16.6 14 17.6 14.6 Q14.8 16.2 12.6 15.4 Q11.2 14.8 11.2 13.2 Z" fill="#CFCFCF"/></svg><div class="t" style="top:10.10px;font-size:15px;line-height:15px;color:#6FA1F0;left:823.80px;">About (Base)</div><svg class="a" style="left:969.6px;top:11px;" width="16" height="13.5" viewBox="0 0 18.5 16"><path d="M11.9 0.1 C15.5 3 16.3 8 15.2 11 C16.5 12.5 18 14 18.4 15.2 C17 14.5 15.5 14.6 14.5 15 C11 16.5 5 15.5 0.1 10.7 C4 12.5 8.5 13 11.3 11.5 C8 9.5 4.5 6.5 2 3 C5 5.5 8 7.8 9.6 8.8 C7.5 6.8 5.6 4.5 4.3 1.9 C7 4.5 10 7 12 8.4 C13 5.8 13 3 11.9 0.1 Z" fill="#C9C9C9"/></svg><div class="t" style="top:10.10px;font-size:15px;line-height:15px;color:#B5B5B5;left:991.80px;">WebViewController</div><svg class="a" style="left:1178.7px;top:11px;" width="16" height="13.5" viewBox="0 0 18.5 16"><path d="M11.9 0.1 C15.5 3 16.3 8 15.2 11 C16.5 12.5 18 14 18.4 15.2 C17 14.5 15.5 14.6 14.5 15 C11 16.5 5 15.5 0.1 10.7 C4 12.5 8.5 13 11.3 11.5 C8 9.5 4.5 6.5 2 3 C5 5.5 8 7.8 9.6 8.8 C7.5 6.8 5.6 4.5 4.3 1.9 C7 4.5 10 7 12 8.4 C13 5.8 13 3 11.9 0.1 Z" fill="#C9C9C9"/></svg><div class="t" style="top:10.10px;font-size:15px;line-height:15px;color:#B5B5B5;left:1200.70px;">AboutTable...ewController</div><svg class="a" style="left:1432.5px;top:11px;" width="16" height="13.5" viewBox="0 0 18.5 16"><path d="M11.9 0.1 C15.5 3 16.3 8 15.2 11 C16.5 12.5 18 14 18.4 15.2 C17 14.5 15.5 14.6 14.5 15 C11 16.5 5 15.5 0.1 10.7 C4 12.5 8.5 13 11.3 11.5 C8 9.5 4.5 6.5 2 3 C5 5.5 8 7.8 9.6 8.8 C7.5 6.8 5.6 4.5 4.3 1.9 C7 4.5 10 7 12 8.4 C13 5.8 13 3 11.9 0.1 Z" fill="#C9C9C9"/></svg><div class="t" style="top:10.10px;font-size:15px;line-height:15px;color:#B5B5B5;left:1455.50px;">W</div><div class="a" style="left:609.6px;top:10px;width:1.2px;height:15px;background:#E2E2E2;"></div><div class="a" style="left:1146.5px;top:10px;width:1.2px;height:15px;background:#E2E2E2;"></div><div class="a" style="left:1401px;top:10px;width:1.2px;height:15px;background:#E2E2E2;"></div><div class="a" style="left:1467px;top:0px;width:117px;height:35px;background:#FFFFFF;"></div><div class="a" style="left:1462px;top:0px;width:5px;height:35px;background:linear-gradient(90deg,rgba(0,0,0,0),rgba(0,0,0,0.05));"></div><svg class="a" style="left:1478px;top:9px;" width="16" height="17" viewBox="0 0 16 17"><g fill="none" stroke="#8E8E8E" stroke-width="1.3"><path d="M3 4.5 L15 4.5 M11.2 0.8 L15 4.5 L11.2 8.2"/><path d="M13 12.5 L1 12.5 M4.8 8.8 L1 12.5 L4.8 16.2"/></g></svg><svg class="a" style="left:1508px;top:9px;" width="23" height="17" viewBox="0 0 23 17"><g stroke="#9A9A9A" stroke-width="1.3"><path d="M0 0.7 L16 0.7 M0 4.6 L23 4.6 M0 8.4 L16 8.4 M0 12.3 L23 12.3 M0 16.2 L23 16.2"/></g></svg><div class="a" style="left:1543px;top:10px;width:1.2px;height:15px;background:#E2E2E2;"></div><svg class="a" style="left:1556px;top:9px;" width="17" height="17" viewBox="0 0 17 17"><g fill="none" stroke="#9A9A9A" stroke-width="1.3"><rect x="0.7" y="0.7" width="15.6" height="15.6" rx="2.5"/><path d="M5.6 0.7 L5.6 16.3"/><path d="M10.8 5.2 L10.8 11.8 M7.5 8.5 L14.1 8.5"/></g></svg><svg class="a" style="left:362px;top:45px;" width="17" height="17" viewBox="0 0 17 17"><rect x="0.6" y="0.6" width="15.8" height="15.8" rx="3.5" fill="#B9D0F8" stroke="#9CBDF5" stroke-width="1.2"/><rect x="2.6" y="2.6" width="11.8" height="11.8" rx="1" fill="#6E9EEC"/><g stroke="#fff" stroke-width="1.4" fill="none" stroke-linecap="round"><path d="M8.5 3.5 L4.5 12.5 M8.5 3.5 L12.5 12.5 M3.5 10.2 L13.5 10.2"/></g></svg><div class="t" style="top:46.00px;font-size:14.3px;line-height:14.3px;color:#CFCFCF;letter-spacing:0.25px;left:386.90px;">FoodPin</div><svg class="a" style="left:446px;top:44.5px;" width="7" height="18" viewBox="0 0 7 18"><path d="M0.7 0.5 L6.2 9 L0.7 17.5" fill="none" stroke="#8C8C8C" stroke-width="1.1"/></svg><svg class="a" style="left:460px;top:47px;" width="16" height="12.5" viewBox="0 0 16 12.5"><path d="M0 1.6 Q0 0 1.6 0 L5 0 Q5.8 0 6.3 0.7 L6.9 1.5 L14.4 1.5 Q16 1.5 16 3.1 L16 3.4 L0 3.4 Z" fill="#C5C5C5"/><path d="M0 4.3 L16 4.3 L16 11 Q16 12.5 14.4 12.5 L1.6 12.5 Q0 12.5 0 11 Z" fill="#C5C5C5"/></svg><div class="t" style="top:46.00px;font-size:14.3px;line-height:14.3px;color:#CFCFCF;letter-spacing:0.25px;left:484.60px;">FoodPin</div><svg class="a" style="left:543.5px;top:44.5px;" width="7" height="18" viewBox="0 0 7 18"><path d="M0.7 0.5 L6.2 9 L0.7 17.5" fill="none" stroke="#8C8C8C" stroke-width="1.1"/></svg><svg class="a" style="left:557.2px;top:47px;" width="16" height="12.5" viewBox="0 0 16 12.5"><path d="M0 1.6 Q0 0 1.6 0 L5 0 Q5.8 0 6.3 0.7 L6.9 1.5 L14.4 1.5 Q16 1.5 16 3.1 L16 3.4 L0 3.4 Z" fill="#C5C5C5"/><path d="M0 4.3 L16 4.3 L16 11 Q16 12.5 14.4 12.5 L1.6 12.5 Q0 12.5 0 11 Z" fill="#C5C5C5"/></svg><div class="t" style="top:45.83px;font-size:14.5px;line-height:14.5px;color:#CFCFCF;letter-spacing:0.25px;left:581.20px;">Storyboard</div><svg class="a" style="left:661.3px;top:44.5px;" width="7" height="18" viewBox="0 0 7 18"><path d="M0.7 0.5 L6.2 9 L0.7 17.5" fill="none" stroke="#8C8C8C" stroke-width="1.1"/></svg><svg class="a" style="left:675.6px;top:46.7px;" width="14" height="13" viewBox="0 0 18 16.5"><path d="M0.9 0.7 L8.4 5.0 L6.5 7.2 Z" fill="#F2D282" stroke="#F2D282" stroke-width="1.3" stroke-linejoin="round"/><path d="M1.9 14.9 L13.8 3.3" stroke="#F2D282" stroke-width="2.3" stroke-linecap="round"/><circle cx="16" cy="1.4" r="1.2" fill="#F2D282"/><circle cx="10.2" cy="10.7" r="0.6" fill="#F2D282"/><circle cx="11.6" cy="9.4" r="0.6" fill="#F2D282"/><path d="M11.2 13.2 Q11.6 10.4 14 10.6 Q16 11 16.2 13 Q16.6 14 17.6 14.6 Q14.8 16.2 12.6 15.4 Q11.2 14.8 11.2 13.2 Z" fill="#F2D282"/></svg><div class="t" style="top:45.83px;font-size:14.5px;line-height:14.5px;color:#CFCFCF;letter-spacing:0.25px;left:699.70px;">About</div><svg class="a" style="left:744.4px;top:44.5px;" width="7" height="18" viewBox="0 0 7 18"><path d="M0.7 0.5 L6.2 9 L0.7 17.5" fill="none" stroke="#8C8C8C" stroke-width="1.1"/></svg><svg class="a" style="left:758.7px;top:46.7px;" width="14" height="13" viewBox="0 0 18 16.5"><path d="M0.9 0.7 L8.4 5.0 L6.5 7.2 Z" fill="#F2D282" stroke="#F2D282" stroke-width="1.3" stroke-linejoin="round"/><path d="M1.9 14.9 L13.8 3.3" stroke="#F2D282" stroke-width="2.3" stroke-linecap="round"/><circle cx="16" cy="1.4" r="1.2" fill="#F2D282"/><circle cx="10.2" cy="10.7" r="0.6" fill="#F2D282"/><circle cx="11.6" cy="9.4" r="0.6" fill="#F2D282"/><path d="M11.2 13.2 Q11.6 10.4 14 10.6 Q16 11 16.2 13 Q16.6 14 17.6 14.6 Q14.8 16.2 12.6 15.4 Q11.2 14.8 11.2 13.2 Z" fill="#F2D282"/></svg><div class="t" style="top:45.83px;font-size:14.5px;line-height:14.5px;color:#CFCFCF;letter-spacing:0.25px;left:782.40px;">About (Base)</div><svg class="a" style="left:875px;top:44.5px;" width="7" height="18" viewBox="0 0 7 18"><path d="M0.7 0.5 L6.2 9 L0.7 17.5" fill="none" stroke="#8C8C8C" stroke-width="1.1"/></svg><svg class="a" style="left:889px;top:45px;" width="16" height="16" viewBox="0 0 16 16"><path d="M1.5 0 L14.5 0 Q16 0 16 1.5 L16 4.6 L0 4.6 L0 1.5 Q0 0 1.5 0 Z" fill="#F2D282"/><g stroke="#fff" stroke-width="1.2"><path d="M3 3.8 L5 0.8 M6.8 3.8 L8.8 0.8 M10.6 3.8 L12.6 0.8"/></g><path d="M0 5.6 L16 5.6 L16 14.5 Q16 16 14.5 16 L1.5 16 Q0 16 0 14.5 Z" fill="#F2D282"/><rect x="3.2" y="8" width="9.6" height="5.6" fill="#fff"/></svg><div class="t" style="top:45.83px;font-size:14.5px;line-height:14.5px;color:#CFCFCF;letter-spacing:0.25px;left:913.00px;">View Controller Scene</div><svg class="a" style="left:1067px;top:44.5px;" width="7" height="18" viewBox="0 0 7 18"><path d="M0.7 0.5 L6.2 9 L0.7 17.5" fill="none" stroke="#8C8C8C" stroke-width="1.1"/></svg><svg class="a" style="left:1080px;top:44px;" width="18" height="18" viewBox="0 0 18 18"><circle cx="9" cy="9" r="9" fill="#F2D282"/><rect x="4.6" y="4.6" width="8.8" height="8.8" rx="1.8" fill="#fff"/></svg><div class="t" style="top:45.74px;font-size:14.6px;line-height:14.6px;color:#CFCFCF;letter-spacing:0.25px;left:1105.00px;">Web View Controller</div><svg class="a" style="left:1525.6px;top:46px;" width="9" height="15" viewBox="0 0 9 15"><path d="M8.2 0.7 L1 7.5 L8.2 14.3" fill="none" stroke="#8E8E8E" stroke-width="1.3"/></svg><svg class="a" style="left:1542px;top:46px;" width="15" height="14" viewBox="0 0 15 14"><path d="M7.5 0.8 Q8.3 0.8 8.8 1.6 L14.5 11.8 Q15 13.5 13.4 13.5 L1.6 13.5 Q0 13.5 0.5 11.8 L6.2 1.6 Q6.7 0.8 7.5 0.8 Z" fill="#F4CE5E"/><path d="M7.5 4.5 L7.5 8.8" stroke="#fff" stroke-width="1.6" stroke-linecap="round"/><circle cx="7.5" cy="11" r="0.95" fill="#fff"/></svg><svg class="a" style="left:1564px;top:46px;" width="9" height="15" viewBox="0 0 9 15"><path d="M0.8 0.7 L8 7.5 L0.8 14.3" fill="none" stroke="#8E8E8E" stroke-width="1.3"/></svg><svg class="a" style="left:370px;top:92px;" width="11" height="7" viewBox="0 0 11 7"><path d="M0.8 0.8 L5.5 5.6 L10.2 0.8" fill="none" stroke="#6E6E6E" stroke-width="1.4" stroke-linecap="round" stroke-linejoin="round"/></svg><svg class="a" style="left:390px;top:88px;" width="16" height="16" viewBox="0 0 16 16"><path d="M1.5 0 L14.5 0 Q16 0 16 1.5 L16 4.4 L0 4.4 L0 1.5 Q0 0 1.5 0 Z" fill="#E9B23A"/><g stroke="#fff" stroke-width="1.1"><path d="M3 3.6 L4.8 0.8 M6.8 3.6 L8.6 0.8 M10.6 3.6 L12.4 0.8"/></g><path d="M0 5.4 L16 5.4 L16 14.5 Q16 16 14.5 16 L1.5 16 Q0 16 0 14.5 Z" fill="#E9B23A"/><g fill="#fff" opacity="0.9"><rect x="3.5" y="7.5" width="4.2" height="2.4"/><rect x="8.3" y="7.5" width="4.2" height="2.4"/><rect x="3.5" y="10.5" width="4.2" height="2.4"/><rect x="8.3" y="10.5" width="4.2" height="2.4"/></g></svg><div class="t" style="top:88.71px;font-size:14.4px;line-height:14.4px;color:#262626;font-weight:700;left:413.30px;">About Scene</div><svg class="a" style="left:393.5px;top:119px;" width="7" height="11" viewBox="0 0 7 11"><path d="M0.8 0.8 L5.8 5.5 L0.8 10.2" fill="none" stroke="#6E6E6E" stroke-width="1.4" stroke-linecap="round" stroke-linejoin="round"/></svg><svg class="a" style="left:410px;top:115px;" width="18" height="18" viewBox="0 0 18 18"><circle cx="9" cy="9" r="9" fill="#E9B23A"/><g fill="#fff"><rect x="4.3" y="5" width="4.2" height="2.2" rx="0.5"/><rect x="9.5" y="5" width="4.2" height="2.2" rx="0.5"/><rect x="4.3" y="8" width="4.2" height="2.2" rx="0.5"/><rect x="9.5" y="8" width="4.2" height="2.2" rx="0.5"/><rect x="4.3" y="11" width="4.2" height="2.2" rx="0.5"/><rect x="9.5" y="11" width="4.2" height="2.2" rx="0.5"/></g></svg><div class="t" style="top:116.90px;font-size:15px;line-height:15px;color:#262626;left:433.60px;">About</div><svg class="a" style="left:410px;top:139px;" width="18" height="18" viewBox="0 0 18 18"><rect x="0" y="0" width="18" height="18" rx="3.5" fill="#EE8C4C"/><path d="M7.2 5.2 L9.8 3.8 L9.8 14.2" fill="none" stroke="#fff" stroke-width="1.9"/></svg><div class="t" style="top:140.30px;font-size:15px;line-height:15px;color:#262626;left:433.60px;">First Responder</div><svg class="a" style="left:410px;top:162.5px;" width="18" height="18" viewBox="0 0 18 18"><rect x="0" y="0" width="18" height="18" rx="3.5" fill="#EE8C4C"/><path d="M10.5 4.2 L4.2 4.2 L4.2 13.8 L10.5 13.8" fill="none" stroke="#fff" stroke-width="1.5"/><path d="M7.5 9 L14 9 M11.6 6.6 L14 9 L11.6 11.4" fill="none" stroke="#fff" stroke-width="1.4"/></svg><div class="t" style="top:163.70px;font-size:15px;line-height:15px;color:#262626;left:433.60px;">Exit</div><svg class="a" style="left:410px;top:186px;" width="18" height="18" viewBox="0 0 18 18"><circle cx="9" cy="9" r="9" fill="#4D6683"/><rect x="4.4" y="5.4" width="9.2" height="7.2" rx="1" fill="none" stroke="#fff" stroke-width="1.3"/><rect x="5.8" y="6.6" width="6.4" height="1.6" fill="#fff"/></svg><div class="t" style="top:187.10px;font-size:15px;line-height:15px;color:#262626;left:433.60px;">Present Modally...</div><div class="a" style="left:364px;top:212px;width:232px;height:1px;background:#DADADA;"></div><svg class="a" style="left:370px;top:224px;" width="11" height="7" viewBox="0 0 11 7"><path d="M0.8 0.8 L5.5 5.6 L10.2 0.8" fill="none" stroke="#6E6E6E" stroke-width="1.4" stroke-linecap="round" stroke-linejoin="round"/></svg><svg class="a" style="left:390px;top:220px;" width="16" height="16" viewBox="0 0 16 16"><path d="M1.5 0 L14.5 0 Q16 0 16 1.5 L16 4.4 L0 4.4 L0 1.5 Q0 0 1.5 0 Z" fill="#E9B23A"/><g stroke="#fff" stroke-width="1.1"><path d="M3 3.6 L4.8 0.8 M6.8 3.6 L8.6 0.8 M10.6 3.6 L12.4 0.8"/></g><path d="M0 5.4 L16 5.4 L16 14.5 Q16 16 14.5 16 L1.5 16 Q0 16 0 14.5 Z" fill="#E9B23A"/><rect x="3.4" y="7.6" width="9.2" height="6" fill="#fff"/></svg><div class="t" style="top:221.01px;font-size:14.4px;line-height:14.4px;color:#262626;font-weight:700;left:413.00px;">Web View Controll...</div><div class="a" style="left:364px;top:245px;width:232px;height:23px;background:#DCDCDC;border-radius:6px;"></div><svg class="a" style="left:391px;top:253px;" width="11" height="7" viewBox="0 0 11 7"><path d="M0.8 0.8 L5.5 5.6 L10.2 0.8" fill="none" stroke="#6E6E6E" stroke-width="1.4" stroke-linecap="round" stroke-linejoin="round"/></svg><svg class="a" style="left:410px;top:247px;" width="18" height="18" viewBox="0 0 18 18"><circle cx="9" cy="9" r="9" fill="#E9B23A"/><rect x="4.6" y="4.6" width="8.8" height="8.8" rx="1.8" fill="#fff"/></svg><div class="t" style="top:249.30px;font-size:15px;line-height:15px;color:#262626;left:433.50px;">Web View Contr...</div><svg class="a" style="left:414.5px;top:275px;" width="7" height="11" viewBox="0 0 7 11"><path d="M0.8 0.8 L5.8 5.5 L0.8 10.2" fill="none" stroke="#6E6E6E" stroke-width="1.4" stroke-linecap="round" stroke-linejoin="round"/></svg><svg class="a" style="left:431px;top:271px;" width="18" height="18" viewBox="0 0 18 18"><rect x="1" y="1" width="16" height="16" rx="1.5" fill="#fff" stroke="#4F6380" stroke-width="2"/></svg><div class="t" style="top:272.30px;font-size:15px;line-height:15px;color:#262626;left:454.50px;">View</div><svg class="a" style="left:410px;top:294.5px;" width="18" height="18" viewBox="0 0 18 18"><rect x="0" y="0" width="18" height="18" rx="3.5" fill="#EE8C4C"/><path d="M7.2 5.2 L9.8 3.8 L9.8 14.2" fill="none" stroke="#fff" stroke-width="1.9"/></svg><div class="t" style="top:295.60px;font-size:15px;line-height:15px;color:#262626;left:433.60px;">First Responder</div><svg class="a" style="left:410px;top:318px;" width="18" height="18" viewBox="0 0 18 18"><rect x="0" y="0" width="18" height="18" rx="3.5" fill="#EE8C4C"/><path d="M10.5 4.2 L4.2 4.2 L4.2 13.8 L10.5 13.8" fill="none" stroke="#fff" stroke-width="1.5"/><path d="M7.5 9 L14 9 M11.6 6.6 L14 9 L11.6 11.4" fill="none" stroke="#fff" stroke-width="1.4"/></svg><div class="t" style="top:319.00px;font-size:15px;line-height:15px;color:#262626;left:433.60px;">Exit</div><div class="a" style="left:364px;top:344px;width:232px;height:1px;background:#DADADA;"></div><svg class="a" style="left:372px;top:355px;" width="7" height="11" viewBox="0 0 7 11"><path d="M0.8 0.8 L5.8 5.5 L0.8 10.2" fill="none" stroke="#6E6E6E" stroke-width="1.4" stroke-linecap="round" stroke-linejoin="round"/></svg><svg class="a" style="left:390px;top:352px;" width="16" height="16" viewBox="0 0 16 16"><path d="M1.5 0 L14.5 0 Q16 0 16 1.5 L16 4.4 L0 4.4 L0 1.5 Q0 0 1.5 0 Z" fill="#E9B23A"/><g stroke="#fff" stroke-width="1.1"><path d="M3 3.6 L4.8 0.8 M6.8 3.6 L8.6 0.8 M10.6 3.6 L12.4 0.8"/></g><path d="M0 5.4 L16 5.4 L16 14.5 Q16 16 14.5 16 L1.5 16 Q0 16 0 14.5 Z" fill="#E9B23A"/><path d="M9.8 7.4 L6.2 10.6 L9.8 13.8" fill="none" stroke="#fff" stroke-width="1.6"/></svg><div class="t" style="top:353.61px;font-size:14.4px;line-height:14.4px;color:#262626;font-weight:700;left:413.00px;">About Scene</div><div class="a" style="left:658px;top:116px;width:237px;height:19px;background:#FFFFFF;box-sizing:border-box;border:1px solid #CFCFCF;border-radius:3px;"></div><div class="t" style="top:122.23px;font-size:8px;line-height:8px;color:#444;font-weight:700;left:377.00px;width:800px;text-align:center;">About</div><div class="a" style="left:658px;top:142px;width:237px;height:512px;background:#EAEAEA;box-sizing:border-box;border:1px solid #7A7A7A;border-radius:38px;"></div><div class="a" style="left:740.5px;top:150px;width:73px;height:20px;background:#000;border-radius:10px;"></div><div class="t" style="top:185.84px;font-size:10px;line-height:10px;color:#1A1A1A;left:377.00px;width:800px;text-align:center;-webkit-text-stroke:0.3px #1A1A1A;">Title</div><div class="t" style="top:410.76px;font-size:16px;line-height:16px;color:#8E8E8E;right:1063.00px;text-align:right;">Navigation Controller</div><div class="a" style="left:736px;top:645px;width:83px;height:3.5px;background:#111;border-radius:2px;"></div><div class="a" style="left:958px;top:115px;width:238px;height:19px;background:#FFFFFF;box-sizing:border-box;border:1px solid #CFCFCF;border-radius:3px;"></div><div class="t" style="top:121.23px;font-size:8px;line-height:8px;color:#444;font-weight:700;left:677.00px;width:800px;text-align:center;">About</div><div class="a" style="left:958px;top:141px;width:238px;height:512px;box-sizing:border-box;border:1px solid #6F6F6F;border-radius:38px;overflow:hidden;background:#EAEAEA;"><div class="a" style="left:0;top:0;width:238px;height:252px;background:#fff;"></div></div><div class="a" style="left:1041px;top:149px;width:73px;height:20px;background:#000;border-radius:10px;"></div><div class="t" style="top:184.11px;font-size:10.5px;line-height:10.5px;color:#111;left:677.50px;width:800px;text-align:center;-webkit-text-stroke:0.3px #111;">About</div><div class="t" style="top:343.37px;font-size:7.6px;line-height:7.6px;color:#8A8A8A;left:983.20px;">PROTOTYPE CELLS</div><div class="t" style="top:365.03px;font-size:8px;line-height:8px;color:#222;left:983.20px;">Title</div><div class="t" style="top:505.61px;font-size:17px;line-height:17px;color:#9A9A9A;left:677.20px;width:800px;text-align:center;">Table View</div><div class="t" style="top:530.11px;font-size:10.5px;line-height:10.5px;color:#A2A2A2;left:677.20px;width:800px;text-align:center;">Prototype Content</div><div class="a" style="left:1035.5px;top:644.8px;width:84px;height:3.6px;background:#111;border-radius:2px;"></div><svg class="a" style="left:1005px;top:215px;" width="145" height="100" viewBox="0 0 145 100">
<path d="M41.8 12.9 L98.9 10.4 L101.4 52.2 L44.2 55.3 Z" fill="#EFF1F8" stroke="#DDE1EC" stroke-width="0.6"/>
<path d="M41.8 12.9 L98.9 10.4 L99.4 16.3 L42.2 18.8 Z" fill="#E1E4EE"/>
<circle cx="44.6" cy="15.6" r="0.9" fill="#EF5B4E"/><circle cx="47.6" cy="15.4" r="0.9" fill="#F3C23F"/><circle cx="50.6" cy="15.3" r="0.9" fill="#4CC36A"/>
<rect x="49.5" y="25.5" width="14" height="25" fill="none" stroke="#CDD1DE" stroke-width="1"/>
<path d="M68.5 28.5 L88 27.5 M68.8 32 L92 31 M69 35.5 L83.5 35 M69.2 39 L89 38.2" stroke="#D3D7E3" stroke-width="1.4"/>
<rect x="69.5" y="43.5" width="13" height="4" rx="2" fill="#2F3FE8"/>
<path d="M25.5 41.5 Q23 55 13.5 73 L21 77 Q30 60 37 47 Q40 60 41 77.5 L52.5 78 Q52 62 49 57 Q46 47 42 42 Z" fill="#5DB678"/>
<path d="M37 45 Q40 60 41 77.5 L52.5 78 Q52 62 49 57 Q46 47 42 42 Z" fill="#52A56C"/>
<path d="M23 25.5 Q29 23 36 25 L37 35.5 L23.5 36 Z" fill="#F06A4F"/>
<path d="M29 35 L49 37.5 L50 40 L28 39 Z" fill="#E9A27F"/>
<path d="M36 31 L43 29.5 L44 32 L37 34 Z" fill="#E9A27F"/>
<circle cx="29.5" cy="19.5" r="4.3" fill="#E9A27F"/>
<path d="M25 18 Q27 13.5 32 15 Q30 17 28 17.5 Q27 21 25 21 Z" fill="#2B2B3A"/>
<circle cx="25.5" cy="20" r="2" fill="#2B2B3A"/>
<path d="M10 81 L13.5 77 L18 78 L23 91 L9.5 89 Z" fill="#3E4462"/>
<path d="M43.5 86 L49 84.5 L58 88.5 L58 91.5 L43.5 91.5 Z" fill="#3E4462"/>
<path d="M9.2 88.5 L23.2 91.5" stroke="#F06A4F" stroke-width="0.8"/>
<path d="M104 33.5 L125.5 32.5 L133 77.5 L124 78.5 L117 48 L114.5 78.5 L103.5 78.5 Z" fill="#F4CB4F"/>
<path d="M104 33.5 L116 33 L117 48 L114.5 78.5 L103.5 78.5 Z" fill="#E0AE3E"/>
<path d="M107 16.5 Q115 14.5 125 17.5 L126 27 L119.5 28.5 L119 32.5 L108 33 Z" fill="#D6419B"/>
<path d="M104 36.5 L120 32.5 L122 29 L119 28.5 L103 34 Z" fill="#E9A27F"/>
<path d="M100.5 9.5 L106 9.8 L106 29.5 L103 30 L102 12 L99 11 Z" fill="#E9A27F"/>
<circle cx="114.5" cy="11.8" r="4" fill="#E9A27F"/>
<path d="M110.5 10.5 Q112 6.5 117 7.5 Q119 9.5 118 12 Q115 10 111 11 Z" fill="#2B2B3A"/>
<path d="M97 87 L103 84 L110.5 84 L110.5 89 L97 89 Z" fill="#3E4462"/>
<path d="M125 84.5 L133 84 L135 89 L125 89 Z" fill="#3E4462"/>
<path d="M97 88.8 L110.5 88.8 M125 88.8 L135 88.8" stroke="#D6419B" stroke-width="0.8"/>
</svg><div class="a" style="left:1252px;top:176px;width:248px;height:524px;background:#CCDAF2;"></div><div class="a" style="left:1257px;top:115px;width:238px;height:20px;background:#FFFFFF;box-sizing:border-box;border:1.3px solid #80A7F3;border-radius:3px;"></div><svg class="a" style="left:1347px;top:118px;" width="14.5" height="14" viewBox="0 0 14.5 14"><rect x="0" y="0" width="14.5" height="14" rx="2.5" fill="#2E7BF6"/><circle cx="7.25" cy="7" r="4.6" fill="#fff"/><rect x="5.1" y="4.9" width="4.3" height="4.2" fill="#2E7BF6"/></svg><svg class="a" style="left:1372px;top:120px;" width="9.5" height="9.5" viewBox="0 0 9.5 9.5"><rect x="0" y="0" width="9.5" height="9.5" rx="2" fill="#EE8C4C"/><path d="M3.9 3 L5.3 2.4 L5.3 7.4" fill="none" stroke="#fff" stroke-width="1"/></svg><svg class="a" style="left:1394px;top:120px;" width="9.5" height="9.5" viewBox="0 0 9.5 9.5"><rect x="0" y="0" width="9.5" height="9.5" rx="2" fill="#EE8C4C"/><path d="M5.5 2.3 L2.3 2.3 L2.3 7.2 L5.5 7.2 M4 4.75 L7.5 4.75" fill="none" stroke="#fff" stroke-width="0.9"/></svg><div class="a" style="left:1258px;top:141px;width:236px;height:512px;border-radius:38px;overflow:hidden;background:#1F2D4A;"><div class="a" style="left:0;top:0;width:236px;height:34px;background:#000;"></div><div class="a" style="left:0;top:34px;width:236px;height:1.4px;background:#B4B4B4;"></div><div class="a" style="left:0;top:35.4px;width:236px;height:7px;background:#14213D;"></div><div class="a" style="left:10px;top:35.6px;width:216px;height:12px;background:#B1C0D9;border-radius:6px 6px 0 0;"></div><div class="a" style="left:1.3px;top:42px;width:233.4px;height:468.7px;background:#55667F;border-radius:6px 6px 37px 37px;"></div></div><div class="a" style="left:1334px;top:645.5px;width:84px;height:3px;background:#0E1630;border-radius:2px;"></div><svg class="a" style="left:895px;top:385px;" width="64" height="24" viewBox="0 0 64 24"><path d="M0 13 L23.5 13" stroke="#7A7A7A" stroke-width="1.2"/><circle cx="32.2" cy="12.5" r="8.4" fill="#F1F1F1" stroke="#7A7A7A" stroke-width="1"/><path d="M29.8 9 Q29.6 11.2 31.6 12.6 Q33.8 14 34 16" fill="none" stroke="#7A7A7A" stroke-width="0.9"/><circle cx="29.8" cy="8.9" r="1.1" fill="#7A7A7A"/><circle cx="34" cy="16" r="1.1" fill="#7A7A7A"/><path d="M40.6 12.5 L62 12.5 M52 2.5 L62 12 L52 21.5" fill="none" stroke="#7A7A7A" stroke-width="1.2"/></svg><svg class="a" style="left:1196px;top:385px;" width="64" height="24" viewBox="0 0 64 24"><path d="M0 12.2 L22 12.2" stroke="#7A7A7A" stroke-width="1.2"/><circle cx="30.2" cy="12.2" r="8.4" fill="#F1F1F1" stroke="#7A7A7A" stroke-width="1"/><rect x="26.4" y="9.5" width="7.4" height="5" rx="0.8" fill="none" stroke="#999" stroke-width="0.9"/><rect x="26.4" y="9.5" width="7.4" height="1.6" fill="#999"/><path d="M38.6 12.5 L58 12.5 M51 3 L60 12.5 L51 22" fill="none" stroke="#7A7A7A" stroke-width="1.2"/></svg><div class="a" style="left:1569.5px;top:265px;width:10.5px;height:319px;background:#7F7F7F;border-radius:5px;"></div><div class="a" style="left:882px;top:760.3px;width:440px;height:10px;background:#7F7F7F;border-radius:5px;"></div><div class="a" style="left:1460px;top:688px;width:82px;height:28px;box-sizing:border-box;background:#2F2F2F;border:1.3px solid #F4F4F4;border-radius:5px;box-shadow:0 1px 3px rgba(0,0,0,0.45);"></div><div class="t" style="top:695.00px;font-size:15px;line-height:15px;color:#FFFFFF;font-weight:700;left:1101.00px;width:800px;text-align:center;">Web View</div><div class="a" style="left:563px;top:247px;width:259px;height:523px;border-radius:10px;overflow:hidden;background:#2B2B2B;box-shadow:0 4px 14px rgba(0,0,0,0.28),0 0 0 1px rgba(0,0,0,0.85);"><div class="a" style="left:0;top:0;width:259px;height:21px;background:#1E1E1E;"></div><div class="a" style="left:243px;top:21px;width:16px;height:486px;background:#313131;"></div><div class="a" style="left:0;top:506px;width:259px;height:17px;background:#1F1F1F;"></div></div><svg class="a" style="left:563px;top:268px;" width="243" height="486" viewBox="0 0 243 486"><path d="M95.5 0 L95.5 348 Q95.5 386 133.5 386 L243 386" fill="none" stroke="rgba(255,255,255,0.05)" stroke-width="1"/></svg><div class="t" style="left:563px;top:268px;width:243px;height:484px;overflow:hidden;"><div class="t" style="left:134px;top:142.8px;font-size:16px;line-height:16px;color:rgba(255,255,255,0.035);width:0;"><div class="t" style="right:-160px;">Navigation Controller</div></div></div><svg class="a" style="left:566px;top:250px;" width="15" height="15" viewBox="0 0 15 15"><circle cx="7.5" cy="7.5" r="7.3" fill="#111"/><circle cx="7.5" cy="7.5" r="6.6" fill="#8C8C8C"/><path d="M5 5 L10 10 M10 5 L5 10" stroke="#3C3C3C" stroke-width="2.6" stroke-linecap="round"/></svg><div class="t" style="top:249.81px;font-size:14.4px;line-height:14.4px;color:#FFFFFF;font-weight:700;left:292.00px;width:800px;text-align:center;text-shadow:0 1px 1px #000;">Web View Controller</div><div class="t" style="top:277.10px;font-size:16.3px;line-height:16.3px;color:#9D9D9D;font-weight:700;left:572.00px;text-shadow:0 1px 1px #111;">Triggered Segues</div><div class="t" style="top:304.83px;font-size:12.6px;line-height:12.6px;color:#F0F0F0;letter-spacing:0.05px;left:587.70px;text-shadow:0 1px 1px #000;-webkit-text-stroke:0.45px #F0F0F0;">manual</div><svg class="a" style="left:779px;top:303.2px;" width="16" height="16" viewBox="0 0 16 16"><circle cx="8" cy="8" r="6.6" fill="none" stroke="#E6E6E6" stroke-width="1.5"/></svg><div class="a" style="left:573px;top:322px;width:222px;height:1.2px;background:#454545;"></div><div class="t" style="top:331.20px;font-size:16.3px;line-height:16.3px;color:#9D9D9D;font-weight:700;left:572.00px;text-shadow:0 1px 1px #111;">Outlets</div><div class="t" style="top:359.33px;font-size:12.6px;line-height:12.6px;color:#F0F0F0;letter-spacing:0.05px;left:587.70px;text-shadow:0 1px 1px #000;-webkit-text-stroke:0.45px #F0F0F0;">searchDisplayController</div><svg class="a" style="left:779px;top:357.7px;" width="16" height="16" viewBox="0 0 16 16"><circle cx="8" cy="8" r="6.6" fill="none" stroke="#E6E6E6" stroke-width="1.5"/></svg><div class="a" style="left:577px;top:377px;width:103px;height:17px;box-sizing:border-box;border:1.5px solid #C4C4C4;border-radius:9px;background:#3A3A3A;"></div><div class="a" style="left:680px;top:385px;width:13px;height:1.3px;background:#C4C4C4;"></div><div class="a" style="left:692.5px;top:377px;width:103px;height:17px;box-sizing:border-box;border:1.5px solid #C4C4C4;border-radius:9px;background:#3C3C3C;"></div><div class="t" style="top:378.63px;font-size:12.6px;line-height:12.6px;color:#F0F0F0;left:587.70px;text-shadow:0 1px 1px #000;-webkit-text-stroke:0.45px #F0F0F0;">view</div><div class="t" style="top:381.68px;font-size:9px;line-height:9px;color:#8A8A8A;left:701.50px;">&#10006;</div><div class="t" style="top:378.60px;font-size:13px;line-height:13px;color:#7E7E7E;font-weight:700;left:715.50px;">View</div><svg class="a" style="left:779px;top:377px;" width="16" height="16" viewBox="0 0 16 16"><circle cx="8" cy="8" r="6.6" fill="#6A6A6A" stroke="#BDBDBD" stroke-width="1.5"/><circle cx="8" cy="8" r="4.6" fill="#5A5A5A"/></svg><div class="t" style="top:398.13px;font-size:12.6px;line-height:12.6px;color:#F0F0F0;letter-spacing:0.05px;left:587.70px;text-shadow:0 1px 1px #000;-webkit-text-stroke:0.45px #F0F0F0;">webView</div><div class="a" style="left:573px;top:414px;width:222px;height:1.2px;background:#454545;"></div><div class="t" style="top:425.70px;font-size:16.3px;line-height:16.3px;color:#9D9D9D;font-weight:700;left:572.00px;text-shadow:0 1px 1px #111;">Presenting Segues</div><div class="t" style="top:452.63px;font-size:12.6px;line-height:12.6px;color:#F0F0F0;letter-spacing:0.05px;left:587.70px;text-shadow:0 1px 1px #000;-webkit-text-stroke:0.45px #F0F0F0;">Relationship</div><svg class="a" style="left:779px;top:451px;" width="16" height="16" viewBox="0 0 16 16"><circle cx="8" cy="8" r="6.6" fill="none" stroke="#E6E6E6" stroke-width="1.5"/></svg><div class="t" style="top:472.13px;font-size:12.6px;line-height:12.6px;color:#F0F0F0;letter-spacing:0.05px;left:587.70px;text-shadow:0 1px 1px #000;-webkit-text-stroke:0.45px #F0F0F0;">Show</div><svg class="a" style="left:779px;top:470.5px;" width="16" height="16" viewBox="0 0 16 16"><circle cx="8" cy="8" r="6.6" fill="none" stroke="#E6E6E6" stroke-width="1.5"/></svg><div class="t" style="top:491.63px;font-size:12.6px;line-height:12.6px;color:#F0F0F0;letter-spacing:0.05px;left:587.70px;text-shadow:0 1px 1px #000;-webkit-text-stroke:0.45px #F0F0F0;">Show Detail</div><svg class="a" style="left:779px;top:490px;" width="16" height="16" viewBox="0 0 16 16"><circle cx="8" cy="8" r="6.6" fill="none" stroke="#E6E6E6" stroke-width="1.5"/></svg><div class="a" style="left:577px;top:509.5px;width:103px;height:17px;box-sizing:border-box;border:1.5px solid #C4C4C4;border-radius:9px;background:#3A3A3A;"></div><div class="a" style="left:680px;top:517.5px;width:13px;height:1.3px;background:#C4C4C4;"></div><div class="a" style="left:692.5px;top:509.5px;width:103px;height:35px;box-sizing:border-box;border:1.5px solid #C4C4C4;border-radius:9px;background:#3C3C3C;"></div><div class="t" style="top:511.03px;font-size:12.6px;line-height:12.6px;color:#F0F0F0;letter-spacing:0.05px;left:587.70px;text-shadow:0 1px 1px #000;-webkit-text-stroke:0.45px #F0F0F0;">Present Mod...</div><div class="t" style="top:513.88px;font-size:9px;line-height:9px;color:#C8C8C8;left:701.50px;">&#10006;</div><div class="t" style="top:511.03px;font-size:12.6px;line-height:12.6px;color:#F0F0F0;left:715.50px;text-shadow:0 1px 1px #000;-webkit-text-stroke:0.45px #F0F0F0;">About</div><div class="t" style="top:529.03px;font-size:12.6px;line-height:12.6px;color:#F0F0F0;left:715.50px;text-shadow:0 1px 1px #000;-webkit-text-stroke:0.45px #F0F0F0;">manual</div><svg class="a" style="left:779px;top:509.5px;" width="16" height="16" viewBox="0 0 16 16"><circle cx="8" cy="8" r="6.6" fill="#8A8A8A" stroke="#E0E0E0" stroke-width="1.5"/><circle cx="8" cy="8" r="4.3" fill="#B8B8B8"/></svg><div class="t" style="top:548.63px;font-size:12.6px;line-height:12.6px;color:#F0F0F0;letter-spacing:0.05px;left:587.70px;text-shadow:0 1px 1px #000;-webkit-text-stroke:0.45px #F0F0F0;">Present As Popover</div><svg class="a" style="left:779px;top:547px;" width="16" height="16" viewBox="0 0 16 16"><circle cx="8" cy="8" r="6.6" fill="none" stroke="#E6E6E6" stroke-width="1.5"/></svg><div class="t" style="top:568.23px;font-size:12.6px;line-height:12.6px;color:#F0F0F0;letter-spacing:0.05px;left:587.70px;text-shadow:0 1px 1px #000;-webkit-text-stroke:0.45px #F0F0F0;">Embed</div><svg class="a" style="left:779px;top:566.6px;" width="16" height="16" viewBox="0 0 16 16"><circle cx="8" cy="8" r="6.6" fill="none" stroke="#E6E6E6" stroke-width="1.5"/></svg><div class="t" style="top:587.63px;font-size:12.6px;line-height:12.6px;color:#F0F0F0;letter-spacing:0.05px;left:587.70px;text-shadow:0 1px 1px #000;-webkit-text-stroke:0.45px #F0F0F0;">Push (deprecated)</div><svg class="a" style="left:779px;top:586px;" width="16" height="16" viewBox="0 0 16 16"><circle cx="8" cy="8" r="6.6" fill="none" stroke="#E6E6E6" stroke-width="1.5"/></svg><div class="t" style="top:607.13px;font-size:12.6px;line-height:12.6px;color:#F0F0F0;letter-spacing:0.05px;left:587.70px;text-shadow:0 1px 1px #000;-webkit-text-stroke:0.45px #F0F0F0;">Modal (deprecated)</div><svg class="a" style="left:779px;top:605.5px;" width="16" height="16" viewBox="0 0 16 16"><circle cx="8" cy="8" r="6.6" fill="none" stroke="#E6E6E6" stroke-width="1.5"/></svg><div class="t" style="top:626.63px;font-size:12.6px;line-height:12.6px;color:#F0F0F0;letter-spacing:0.05px;left:587.70px;text-shadow:0 1px 1px #000;-webkit-text-stroke:0.45px #F0F0F0;">Custom</div><svg class="a" style="left:779px;top:625px;" width="16" height="16" viewBox="0 0 16 16"><circle cx="8" cy="8" r="6.6" fill="none" stroke="#E6E6E6" stroke-width="1.5"/></svg><div class="a" style="left:573px;top:643.5px;width:222px;height:1.2px;background:#454545;"></div><div class="t" style="top:653.70px;font-size:16.3px;line-height:16.3px;color:#9D9D9D;font-weight:700;left:572.00px;text-shadow:0 1px 1px #111;">Referencing Outlets</div><div class="t" style="top:681.13px;font-size:12.6px;line-height:12.6px;color:#F0F0F0;letter-spacing:0.05px;left:587.70px;text-shadow:0 1px 1px #000;-webkit-text-stroke:0.45px #F0F0F0;">New Referencing Outlet</div><svg class="a" style="left:779px;top:679.5px;" width="16" height="16" viewBox="0 0 16 16"><circle cx="8" cy="8" r="6.6" fill="none" stroke="#E6E6E6" stroke-width="1.5"/></svg><div class="a" style="left:573px;top:698.3px;width:222px;height:1.2px;background:#454545;"></div><div class="t" style="top:708.10px;font-size:16.3px;line-height:16.3px;color:#9D9D9D;font-weight:700;left:572.00px;text-shadow:0 1px 1px #111;">Referencing Outlet...</div><div class="t" style="top:735.43px;font-size:12.6px;line-height:12.6px;color:#F0F0F0;letter-spacing:0.05px;left:587.70px;text-shadow:0 1px 1px #000;-webkit-text-stroke:0.45px #F0F0F0;">New Referencing Outlet Colle...</div><svg class="a" style="left:779px;top:733.8px;" width="16" height="16" viewBox="0 0 16 16"><circle cx="8" cy="8" r="6.6" fill="none" stroke="#E6E6E6" stroke-width="1.5"/></svg><div class="a" style="left:573px;top:753px;width:222px;height:1.2px;background:#454545;"></div><svg class="a" style="left:805px;top:755px;" width="14" height="13" viewBox="0 0 14 13"><path d="M2 12 L12 2 M6 12 L12 6 M10 12 L12 10" stroke="#BDBDBD" stroke-width="1.2" stroke-linecap="round"/></svg><svg class="a" style="left:0px;top:0px;pointer-events:none;" width="1920" height="814" viewBox="0 0 1920 814"><line x1="787" y1="404.5" x2="1316" y2="334.3" stroke="rgba(120,150,200,0.22)" stroke-width="6.5"/><line x1="787" y1="404.5" x2="1316" y2="334.3" stroke="rgba(255,255,255,0.9)" stroke-width="4.2"/><line x1="787" y1="404.5" x2="1316" y2="334.3" stroke="#1A8AFB" stroke-width="2"/><circle cx="787" cy="404.5" r="7.2" fill="#D2D2D2"/><circle cx="787" cy="404.5" r="5.6" fill="#F2F2F2"/><circle cx="787" cy="404.5" r="4.3" fill="#4AA0FA"/><circle cx="1316" cy="334.3" r="5" fill="#FFFFFF"/><circle cx="1316" cy="334.3" r="3.8" fill="#4AA0FA"/></svg><svg class="a" style="left:1631.5px;top:9px;" width="14" height="17" viewBox="0 0 14 17"><path d="M1.8 0.7 L8.2 0.7 L13.3 5.8 L13.3 15 Q13.3 16.3 12 16.3 L1.8 16.3 Q0.7 16.3 0.7 15 L0.7 2 Q0.7 0.7 1.8 0.7 Z M8.2 0.7 L8.2 5.8 L13.3 5.8" fill="none" stroke="#9C9895" stroke-width="1.2" stroke-linejoin="round"/></svg><svg class="a" style="left:1668px;top:9.3px;" width="17" height="17" viewBox="0 0 17 17"><circle cx="8.3" cy="8.3" r="7.6" fill="none" stroke="#9C9895" stroke-width="1.3"/><path d="M8.3 3.6 L8.3 8.4 L5.2 8.4" fill="none" stroke="#9C9895" stroke-width="1.3"/></svg><svg class="a" style="left:1707px;top:9.3px;" width="17" height="17" viewBox="0 0 17 17"><circle cx="8.3" cy="8.3" r="7.6" fill="none" stroke="#9C9895" stroke-width="1.3"/><path d="M5.9 6.4 Q5.9 3.9 8.3 3.9 Q10.7 3.9 10.7 6.1 Q10.7 7.6 8.9 8.5 Q8.3 8.9 8.3 10" fill="none" stroke="#9C9895" stroke-width="1.3"/><circle cx="8.3" cy="12.4" r="0.9" fill="#9C9895"/></svg><svg class="a" style="left:1746px;top:10.5px;" width="16.5" height="14.2" viewBox="0 0 16.5 14.2"><rect x="0" y="0" width="16.5" height="14.2" rx="2" fill="#6E9CEF"/><rect x="2.2" y="2.3" width="6.5" height="7" fill="#fff"/><path d="M10.2 3 L14.3 3 M10.2 5.8 L14.3 5.8 M10.2 8.6 L14.3 8.6 M2.2 11.6 L14.3 11.6" stroke="#fff" stroke-width="1.3"/></svg><svg class="a" style="left:1784.5px;top:9px;" width="17" height="17" viewBox="0 0 17 17"><g stroke="#9C9895" stroke-width="1.3" fill="#F3F0ED"><path d="M0 1.6 L17 1.6 M0 8.6 L17 8.6 M0 15 L17 15"/><circle cx="12.5" cy="1.6" r="1.6"/><circle cx="3" cy="8.6" r="1.6"/><circle cx="12.5" cy="15" r="1.6"/></g></svg><svg class="a" style="left:1823.5px;top:10px;" width="16" height="16" viewBox="0 0 16 16"><path d="M0.7 0.7 L15.3 15.3 L0.7 15.3 Z" fill="none" stroke="#9C9895" stroke-width="1.3" stroke-linejoin="round"/><path d="M3.5 7.5 L8.5 12.5 L3.5 12.5 Z" fill="none" stroke="#9C9895" stroke-width="1.1"/></svg><svg class="a" style="left:1862.5px;top:9.8px;" width="17" height="16" viewBox="0 0 17 16"><path d="M13.2 2.6 A7.3 7.3 0 1 0 13.2 12.8" fill="none" stroke="#9C9895" stroke-width="1.3"/><circle cx="8" cy="7.8" r="2.6" fill="#9C9895"/><path d="M8 7.8 L16.5 7.8" stroke="#9C9895" stroke-width="1.3"/></svg><div class="t" style="top:42.99px;font-size:16.2px;line-height:16.2px;color:#7C7975;font-weight:700;left:1595.50px;">Custom Class</div><div class="t" style="top:80.53px;font-size:13.9px;line-height:13.9px;color:#242424;letter-spacing:0.2px;right:231.60px;text-align:right;">Class</div><div class="a" style="left:1696px;top:76px;width:216px;height:21px;background:#fff;border-radius:5px;box-shadow:0 0.5px 1.5px rgba(0,0,0,0.28),0 0 0 0.5px rgba(0,0,0,0.08);"></div><div class="a" style="left:1706px;top:77.4px;width:130px;height:17px;background:#D9D9D9;"></div><div class="t" style="top:79.03px;font-size:14.5px;line-height:14.5px;color:#1E1E1E;letter-spacing:0.05px;left:1706.60px;">WebViewController</div><svg class="a" style="left:1875px;top:79.3px;" width="12" height="12" viewBox="0 0 12 12"><circle cx="6" cy="6" r="6" fill="#7E7E7E"/><path d="M2.8 6 L8.6 6 M6.3 3.6 L8.8 6 L6.3 8.4" fill="none" stroke="#fff" stroke-width="1.4" stroke-linecap="round" stroke-linejoin="round"/></svg><div class="a" style="left:1896.5px;top:77.5px;width:15px;height:16.5px;background:#fff;border-radius:4px;box-shadow:0 0.5px 1.2px rgba(0,0,0,0.3),0 0 0 0.5px rgba(0,0,0,0.08);"></div><svg class="a" style="left:1900.5px;top:84px;" width="7" height="5" viewBox="0 0 7 5"><path d="M0.8 0.8 L3.5 3.6 L6.2 0.8" fill="none" stroke="#222" stroke-width="1.3" stroke-linecap="round" stroke-linejoin="round"/></svg><div class="t" style="top:109.03px;font-size:13.9px;line-height:13.9px;color:#242424;letter-spacing:0.2px;right:231.60px;text-align:right;">Module</div><div class="a" style="left:1696px;top:105px;width:216px;height:20.5px;background:#fff;border-radius:5px;box-shadow:0 0.5px 1.5px rgba(0,0,0,0.28),0 0 0 0.5px rgba(0,0,0,0.08);"></div><div class="t" style="top:108.03px;font-size:14.5px;line-height:14.5px;color:#B8B8B8;left:1706.60px;">FoodPin</div><div class="a" style="left:1896.5px;top:106.5px;width:15px;height:16.5px;background:#fff;border-radius:4px;box-shadow:0 0.5px 1.2px rgba(0,0,0,0.3),0 0 0 0.5px rgba(0,0,0,0.08);"></div><svg class="a" style="left:1900.5px;top:113px;" width="7" height="5" viewBox="0 0 7 5"><path d="M0.8 0.8 L3.5 3.6 L6.2 0.8" fill="none" stroke="#222" stroke-width="1.3" stroke-linecap="round" stroke-linejoin="round"/></svg><div class="a" style="left:1695.5px;top:134.5px;width:14px;height:14px;background:#fff;border-radius:3px;box-shadow:0 0.5px 1.5px rgba(0,0,0,0.3),0 0 0 0.5px rgba(0,0,0,0.1);"></div><svg class="a" style="left:1697.5px;top:137.0px;" width="11" height="10" viewBox="0 0 11 10"><path d="M1 5.2 L4 8.6 L10 1" fill="none" stroke="#111" stroke-width="2" stroke-linecap="round" stroke-linejoin="round"/></svg><div class="t" style="top:133.87px;font-size:14.8px;line-height:14.8px;color:#242424;left:1715.90px;">Inherit Module From Target</div><div class="a" style="left:1596px;top:169px;width:316px;height:1.2px;background:#DAD7D4;"></div><div class="t" style="top:178.89px;font-size:16.2px;line-height:16.2px;color:#7C7975;font-weight:700;left:1595.50px;">Identity</div><div class="t" style="top:215.23px;font-size:13.9px;line-height:13.9px;color:#242424;letter-spacing:0.2px;right:231.60px;text-align:right;">Storyboard ID</div><div class="a" style="left:1696px;top:211.2px;width:216px;height:21px;background:#fff;box-shadow:0 1px 0.5px rgba(0,0,0,0.22),0 0 0 0.5px rgba(0,0,0,0.05);"></div><div class="a" style="left:1596px;top:239.5px;width:316px;height:1.2px;background:#DAD7D4;"></div><div class="t" style="top:251.83px;font-size:13.9px;line-height:13.9px;color:#242424;letter-spacing:0.2px;right:231.60px;text-align:right;">Restoration ID</div><div class="a" style="left:1696px;top:247.9px;width:216px;height:21px;background:#fff;box-shadow:0 1px 0.5px rgba(0,0,0,0.22),0 0 0 0.5px rgba(0,0,0,0.05);"></div><div class="a" style="left:1696px;top:277px;width:14px;height:14px;background:#fff;border-radius:3px;box-shadow:0 0.5px 1.5px rgba(0,0,0,0.3),0 0 0 0.5px rgba(0,0,0,0.1);"></div><div class="t" style="top:276.67px;font-size:14.8px;line-height:14.8px;color:#242424;left:1717.00px;">Use Storyboard ID</div><div class="a" style="left:1596px;top:309.3px;width:316px;height:1.2px;background:#DAD7D4;"></div><div class="t" style="top:318.79px;font-size:16.2px;line-height:16.2px;color:#7C7975;font-weight:700;left:1595.50px;">User Defined Runtime Attributes</div><div class="a" style="left:1596px;top:344px;width:316px;height:125.5px;box-sizing:border-box;background:#fff;border:1.2px solid #BDBDBD;"></div><div class="a" style="left:1597px;top:380px;width:314px;height:1px;background:#E3E3E3;"></div><div class="t" style="top:356.58px;font-size:14.2px;line-height:14.2px;color:#242424;left:1610.40px;">Key Path</div><div class="t" style="top:356.58px;font-size:14.2px;line-height:14.2px;color:#242424;left:1717.70px;">Type</div><div class="t" style="top:356.58px;font-size:14.2px;line-height:14.2px;color:#242424;left:1801.70px;">Value</div><div class="a" style="left:1710px;top:353px;width:1px;height:20px;background:#DCDCDC;"></div><div class="a" style="left:1794px;top:353px;width:1px;height:20px;background:#DCDCDC;"></div><div class="a" style="left:1909.8px;top:353px;width:1.5px;height:20px;background:#DCDCDC;"></div><svg class="a" style="left:1601px;top:449.5px;" width="17" height="17" viewBox="0 0 17 17"><path d="M8.5 0 L8.5 17 M0 8.5 L17 8.5" stroke="#A2A2A2" stroke-width="1.3"/></svg><div class="a" style="left:1627px;top:457.8px;width:17.5px;height:1.2px;background:#D2D2D2;"></div><div class="a" style="left:1596px;top:480px;width:316px;height:1.2px;background:#DAD7D4;"></div><div class="t" style="top:489.59px;font-size:16.2px;line-height:16.2px;color:#7C7975;font-weight:700;left:1595.50px;">Document</div><div class="t" style="top:526.63px;font-size:13.9px;line-height:13.9px;color:#242424;letter-spacing:0.2px;right:231.60px;text-align:right;">Label</div><div class="a" style="left:1696px;top:522.7px;width:216px;height:21px;background:#fff;box-shadow:0 1px 0.5px rgba(0,0,0,0.22),0 0 0 0.5px rgba(0,0,0,0.05);"></div><div class="t" style="top:526.10px;font-size:14.3px;line-height:14.3px;color:#BDBDBD;left:1699.80px;">Xcode Specific Label</div><svg class="a" style="left:1698px;top:556px;" width="11" height="11" viewBox="0 0 11 11"><path d="M1 1 L10 10 M10 1 L1 10" stroke="#2A2A2A" stroke-width="1.8"/></svg><div class="a" style="left:1719.0px;top:556px;width:10.5px;height:10.5px;background:#F0A09B;border-radius:2px;box-shadow:0 0.5px 1px rgba(0,0,0,0.25);"></div><div class="a" style="left:1742.3px;top:556px;width:10.5px;height:10.5px;background:#F2C487;border-radius:2px;box-shadow:0 0.5px 1px rgba(0,0,0,0.25);"></div><div class="a" style="left:1765.6px;top:556px;width:10.5px;height:10.5px;background:#F4E78E;border-radius:2px;box-shadow:0 0.5px 1px rgba(0,0,0,0.25);"></div><div class="a" style="left:1788.9px;top:556px;width:10.5px;height:10.5px;background:#CDE394;border-radius:2px;box-shadow:0 0.5px 1px rgba(0,0,0,0.25);"></div><div class="a" style="left:1812.2px;top:556px;width:10.5px;height:10.5px;background:#93C3F4;border-radius:2px;box-shadow:0 0.5px 1px rgba(0,0,0,0.25);"></div><div class="a" style="left:1835.5px;top:556px;width:10.5px;height:10.5px;background:#D5BDEE;border-radius:2px;box-shadow:0 0.5px 1px rgba(0,0,0,0.25);"></div><div class="a" style="left:1858.8px;top:556px;width:10.5px;height:10.5px;background:#CACACA;border-radius:2px;box-shadow:0 0.5px 1px rgba(0,0,0,0.25);"></div><div class="t" style="top:581.43px;font-size:13.9px;line-height:13.9px;color:#242424;letter-spacing:0.2px;right:231.60px;text-align:right;">Object ID</div><div class="t" style="top:580.93px;font-size:14.5px;line-height:14.5px;color:#242424;left:1697.50px;">rjT-Aj-nHj</div><div class="t" style="top:607.23px;font-size:13.9px;line-height:13.9px;color:#242424;letter-spacing:0.2px;right:231.60px;text-align:right;">Lock</div><div class="a" style="left:1696px;top:603.2px;width:218px;height:21px;background:#fff;border-radius:5px;box-shadow:0 0.5px 1.5px rgba(0,0,0,0.28),0 0 0 0.5px rgba(0,0,0,0.08);"></div><div class="t" style="top:606.73px;font-size:14.5px;line-height:14.5px;color:#242424;left:1704.00px;">Inherited - (Nothing)</div><svg class="a" style="left:1899.5px;top:606.5px;" width="8" height="13" viewBox="0 0 8 13"><path d="M1 4.4 L4 1.2 L7 4.4 M1 8.6 L4 11.8 L7 8.6" fill="none" stroke="#222" stroke-width="1.3" stroke-linecap="round" stroke-linejoin="round"/></svg><div class="t" style="top:636.73px;font-size:13.9px;line-height:13.9px;color:#242424;letter-spacing:0.2px;right:231.60px;text-align:right;">Localizer Hint</div><div class="a" style="left:1696px;top:632.9px;width:216px;height:21px;background:#fff;box-shadow:0 1px 0.5px rgba(0,0,0,0.22),0 0 0 0.5px rgba(0,0,0,0.05);"></div><div class="t" style="top:636.20px;font-size:14.3px;line-height:14.3px;color:#BDBDBD;left:1699.80px;">Comment For Localizer</div><div class="a" style="left:1596px;top:670.5px;width:316px;height:1.2px;background:#DAD7D4;"></div><div class="a" style="left:358px;top:782px;width:243px;height:26px;box-sizing:border-box;background:#fff;border:1px solid #DEDEDE;border-radius:8px;"></div><svg class="a" style="left:364px;top:787px;" width="17" height="17" viewBox="0 0 17 17"><circle cx="8.5" cy="8.5" r="7.6" fill="none" stroke="#222" stroke-width="1.4"/><path d="M4.6 6.2 L12.4 6.2 M5.9 8.8 L11.1 8.8 M7.3 11.4 L9.7 11.4" stroke="#222" stroke-width="1.3"/></svg><div class="t" style="top:788.23px;font-size:14.5px;line-height:14.5px;color:#BDBDBD;left:387.00px;">Filter</div><svg class="a" style="left:622.5px;top:785.3px;" width="16.5" height="16.3" viewBox="0 0 16.5 16.3"><rect x="0.7" y="0.7" width="15" height="14.8" rx="2.5" fill="none" stroke="#737373" stroke-width="1.3"/><rect x="3.2" y="3.2" width="3" height="9.8" rx="0.8" fill="#737373"/></svg><svg class="a" style="left:652.5px;top:784.5px;" width="17.5" height="17.5" viewBox="0 0 17.5 17.5"><circle cx="8.75" cy="8.75" r="8" fill="none" stroke="#737373" stroke-width="1.3"/><circle cx="8.75" cy="4.6" r="1.2" fill="#737373"/><path d="M4.4 6.8 L13.1 6.8 M8.75 6.8 L8.75 10.2 L6.6 14.2 M8.75 10.2 L10.9 14.2" fill="none" stroke="#737373" stroke-width="1.2"/></svg><svg class="a" style="left:686.5px;top:784.5px;" width="17.5" height="17.5" viewBox="0 0 17.5 17.5"><circle cx="8.75" cy="8.75" r="8" fill="none" stroke="#737373" stroke-width="1.3"/><path d="M8.75 0.75 A8 8 0 0 0 8.75 16.75 Z" fill="#737373"/><path d="M8.75 4.4 A4.35 4.35 0 0 1 8.75 13.1 Z" fill="#737373"/><path d="M8.75 4.4 A4.35 4.35 0 0 0 8.75 13.1 Z" fill="#fff"/></svg><svg class="a" style="left:720px;top:781.5px;" width="19" height="20.5" viewBox="0 0 19 20.5"><rect x="0.7" y="7.6" width="12.6" height="12.2" rx="1.2" fill="none" stroke="#737373" stroke-width="1.3"/><path d="M10 3.2 Q16.4 2.6 16.4 8.4 M7.9 1.4 L10.3 3.2 L8.2 5.4" fill="none" stroke="#737373" stroke-width="1.2"/></svg><svg class="a" style="left:751.5px;top:785.3px;" width="16" height="16.3" viewBox="0 0 16 16.3"><rect x="0.7" y="0.7" width="14.6" height="14.8" rx="2.5" fill="none" stroke="#CFCFCF" stroke-width="1.3"/><path d="M8 0.7 L8 15.5" stroke="#CFCFCF" stroke-width="1.3"/></svg><svg class="a" style="left:788.8px;top:785.3px;" width="10.4" height="15.8" viewBox="0 0 10.4 15.8"><rect x="0.7" y="0.7" width="9" height="14.4" rx="1.8" fill="none" stroke="#737373" stroke-width="1.3"/><path d="M4 2.3 L6.4 2.3 M4 13.4 L6.4 13.4" stroke="#737373" stroke-width="0.9"/></svg><div class="t" style="top:785.94px;font-size:14.6px;line-height:14.6px;color:#6E6E6E;left:818.60px;">iPhone 14 Pro</div><svg class="a" style="left:1044px;top:783px;" width="19" height="19" viewBox="0 0 19 19"><circle cx="7.5" cy="7.4" r="6.6" fill="none" stroke="#737373" stroke-width="1.3"/><path d="M4.6 7.4 L10.4 7.4" stroke="#737373" stroke-width="1.3"/><path d="M12.2 12.2 L17.6 17.6" stroke="#737373" stroke-width="1.5" stroke-linecap="round"/></svg><div class="t" style="top:786.10px;font-size:14.3px;line-height:14.3px;color:#6A6A6A;left:1082.40px;">46%</div><svg class="a" style="left:1131px;top:783px;" width="19" height="19" viewBox="0 0 19 19"><circle cx="7.3" cy="7.4" r="6.6" fill="none" stroke="#737373" stroke-width="1.3"/><path d="M4.2 7.4 L10.4 7.4 M7.3 4.3 L7.3 10.5" stroke="#737373" stroke-width="1.3"/><path d="M12 12.2 L17.4 17.6" stroke="#737373" stroke-width="1.5" stroke-linecap="round"/></svg><svg class="a" style="left:1413px;top:783.4px;" width="20" height="19.5" viewBox="0 0 20 19.5"><g fill="none" stroke="#C2C2C2" stroke-width="1.2"><path d="M0.6 3.6 L0.6 0.6 L3.6 0.6 M16.4 0.6 L19.4 0.6 L19.4 3.6 M19.4 15.9 L19.4 18.9 L16.4 18.9 M3.6 18.9 L0.6 18.9 L0.6 15.9"/><path d="M5.6 12.2 A5.2 5.2 0 1 1 10 14.9"/><path d="M12 12.5 L9.6 14.9 L12 17.3"/></g></svg><svg class="a" style="left:1447px;top:784px;" width="19" height="19" viewBox="0 0 19 19"><g fill="none" stroke="#737373" stroke-width="1.2"><path d="M0.6 0 L0.6 19"/><rect x="3.2" y="3.2" width="11.6" height="5.4"/><rect x="3.2" y="11.2" width="15.4" height="5.4"/></g></svg><svg class="a" style="left:1480.4px;top:783.4px;" width="20" height="19.5" viewBox="0 0 20 19.5"><g fill="none" stroke="#737373" stroke-width="1.2"><rect x="6" y="6" width="8" height="8.4"/><path d="M10 0.6 L10 6 M7 0.6 L13 0.6 M10 14.4 L10 18.9 M7 18.9 L13 18.9 M0.6 10 L6 10 M0.6 7.4 L0.6 12.6 M14 10 L19.4 10 M19.4 7.4 L19.4 12.6"/></g></svg><svg class="a" style="left:1514px;top:785px;" width="20" height="16" viewBox="0 0 20 16"><g fill="none" stroke="#737373" stroke-width="1.2"><path d="M10 3.2 L15.4 12.5 L4.6 12.5 Z" stroke-linejoin="round"/><path d="M0.6 7.4 L4.8 7.4 M0.6 4.8 L0.6 10 M15.2 7.4 L19.4 7.4 M19.4 4.8 L19.4 10"/></g><circle cx="10" cy="9.4" r="1.2" fill="#737373"/></svg><svg class="a" style="left:1550.7px;top:785px;" width="19.5" height="18" viewBox="0 0 19.5 18"><g fill="none" stroke="#737373" stroke-width="1.2"><path d="M6.5 1.2 L0.6 1.2 L0.6 17.4 L18.9 17.4 L18.9 1.2 L13 1.2"/><path d="M9.75 0 L9.75 9.5 M6 6.2 L9.75 9.8 L13.5 6.2"/></g></svg>
</body></html>
